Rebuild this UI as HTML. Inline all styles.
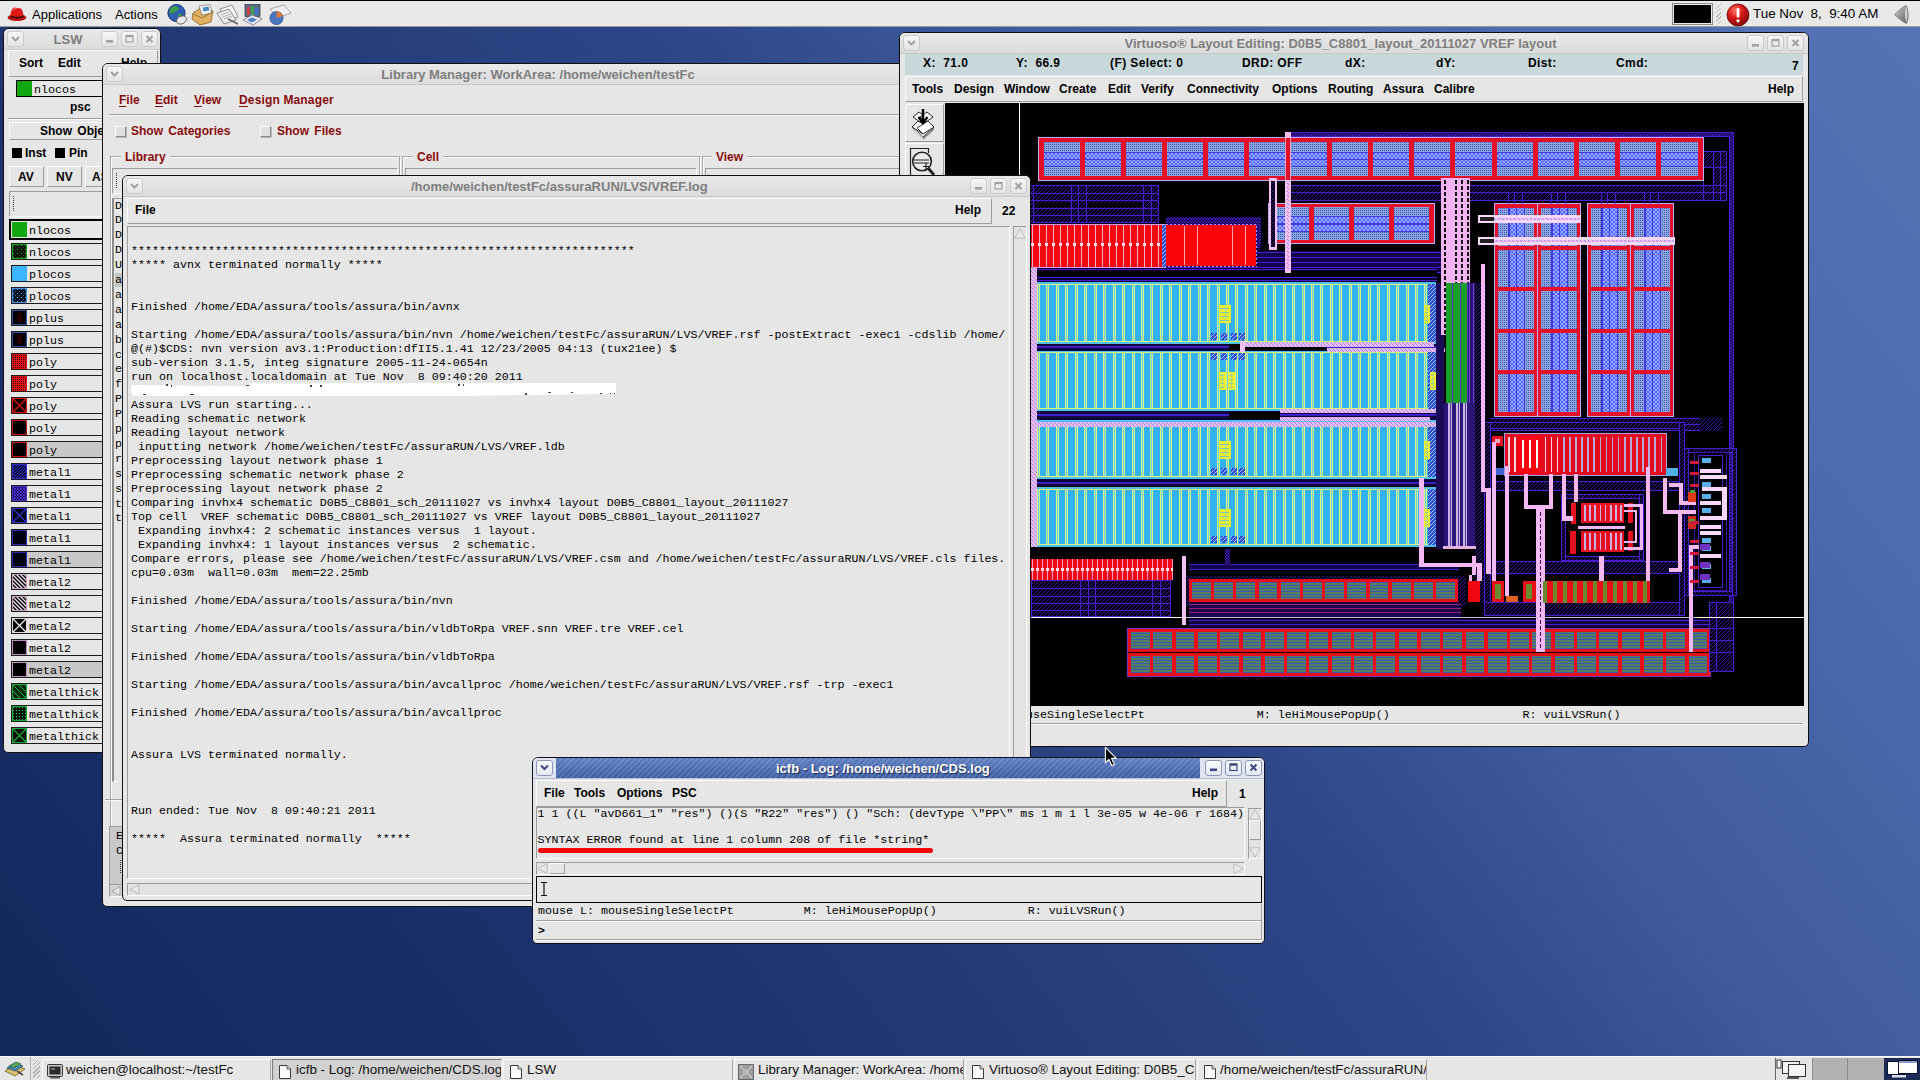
<!DOCTYPE html>
<html><head><meta charset="utf-8"><title>desktop</title>
<style>
*{box-sizing:border-box;margin:0;padding:0}
html,body{width:1920px;height:1080px;overflow:hidden;font-family:"Liberation Sans",sans-serif}
body{position:relative;font-family:"Liberation Sans",sans-serif;font-size:12px;color:#000;
 background:linear-gradient(52deg,#13285c 0%,#182e66 18%,#213875 35%,#2d4786 54%,#3f5b9d 66%,#4c6aae 83%,#5272b4 96%,#5474b6 100%)}
.abs{position:absolute}
.sans{font-family:"Liberation Sans",sans-serif}
.mono{font-family:"Liberation Mono",monospace;font-size:11.67px;white-space:pre;color:#000}
.b{font-weight:bold}
/* panels */
#top{left:0;top:0;width:1920px;height:27px;background:#e9e9e9;border-top:1px solid #000;border-bottom:1px solid #9a9a9a}
#bot{left:0;top:1056px;width:1920px;height:24px;background:#e6e6e6;border-top:1px solid #f8f8f8}
/* windows */
.win{position:absolute;background:#e6e6e6;border:1px solid #101010;border-radius:6px 6px 5px 5px;overflow:hidden}
.tb{position:absolute;left:0;top:0;right:0;height:21px;background:linear-gradient(#e9e9e9,#dcdcdc);border-bottom:1px solid #c8c8c8}
.tb .ttl{position:absolute;left:0;right:0;top:2px;text-align:center;font-weight:bold;font-size:13px;color:#7e7e7e;line-height:17px;white-space:pre}
.wb{position:absolute;top:3px;width:17px;height:15px;border:1px solid #c4c4c4;border-radius:3px;background:linear-gradient(#f4f4f4,#e2e2e2);box-shadow:inset 0 0 0 1px #f8f8f8}
.wb svg{position:absolute;left:0;top:0}
.raised{border:1px solid;border-color:#fbfbfb #9c9c9c #9c9c9c #fbfbfb}
.sunken{border:1px solid;border-color:#9c9c9c #fbfbfb #fbfbfb #9c9c9c}
u{text-underline-offset:2px}
.menu{position:absolute;font-weight:bold;font-size:12px;white-space:pre}

.lrow{position:absolute;left:7px;width:120px;height:17px;border:1px solid #1c1c1c;}
.lrow svg{position:absolute;left:0;top:0}
.lrow span{position:absolute;left:17px;top:1.5px;font-family:"Liberation Mono",monospace;font-size:11.67px;line-height:15px;white-space:pre}
.wbtn{position:absolute;top:2px;width:17px;height:16px;border:1px solid #cacaca;border-radius:3px;background:linear-gradient(#f6f6f6,#e4e4e4)}

.red{color:#8a0c0c}
.chk{position:absolute;width:11px;height:11px;border:1px solid;border-color:#fdfdfd #8c8c8c #8c8c8c #fdfdfd;background:#e0e0e0;box-shadow:1px 1px 0 #b8b8b8}
.etch{position:absolute;border:1px solid #a8a8a8;box-shadow:1px 1px 0 #fbfbfb, inset 1px 1px 0 #fbfbfb}

.awb{position:absolute;top:2px;width:17px;height:16px;border:1px solid #8a96bc;border-radius:3px;background:linear-gradient(#fbfbff,#e4e8f2)}
.atb{position:absolute;left:0;top:0;right:0;height:21px;background:#dfe4ef;border-bottom:1px solid #b8c0d8}
.atb .bar{position:absolute;left:23px;right:64px;top:0;height:20px;background:repeating-linear-gradient(135deg,rgba(255,255,255,.13) 0 1.5px,rgba(255,255,255,0) 1.5px 4px),linear-gradient(#5f80c0,#4a6aae 60%,#4060a4)}
.atb .ttl{position:absolute;top:2px;font-weight:bold;font-size:13px;color:#fff;line-height:17px;white-space:pre;text-shadow:1px 1px 1px #1c2c5c}

.task{position:absolute;top:2px;height:22px;border:1px solid;border-color:#fafafa #a8a8a8 #a8a8a8 #fafafa;overflow:hidden}
.task.act{background:#d2d2d2;border-color:#7c7c7c #f4f4f4 #f4f4f4 #7c7c7c}
.task span{position:absolute;top:2px;font-size:13.4px;line-height:16px;white-space:pre;color:#111}
</style></head>
<body>
<!-- TOP PANEL -->
<div id="top" class="abs">
 <svg class="abs" style="left:6px;top:3px" width="22" height="20" viewBox="0 0 22 20">
  <ellipse cx="11" cy="13.5" rx="9.3" ry="3.6" fill="#b80f0f"/>
  <path d="M4.5 12.5 C4.5 6 7 3.2 9.5 3.6 C11 3.9 12 4.6 13.5 4.2 C16 3.6 17.2 8 17.6 12.5 C14 15 8 15 4.5 12.5Z" fill="#e01818"/>
  <path d="M4.6 11.2 C8 13.4 14 13.4 17.5 11.2 L17.6 12.8 C14 15 8 15 4.5 12.8Z" fill="#2a0a0a"/>
  <path d="M7 6.5 C8 4.5 9.5 4.2 10.5 4.6" stroke="#ff8a8a" stroke-width="1" fill="none"/>
 </svg>
 <div class="abs" style="left:32px;top:6px;font-size:13px;line-height:16px">Applications</div>
 <div class="abs" style="left:115px;top:6px;font-size:13px;line-height:16px">Actions</div>
 <!-- launcher icons -->
 <svg class="abs" style="left:166px;top:2px" width="126" height="23" viewBox="0 0 126 23">
  <!-- globe+mouse -->
  <circle cx="10.5" cy="10" r="8.6" fill="#2f5fae"/><path d="M5 5 C8 2 12 3 13 6 C11 9 7 9 5 12 C3 9 3 7 5 5Z" fill="#3f9a4a"/><path d="M12 11 C15 10 17 12 16 15 C14 17 12 15 12 11Z" fill="#3f9a4a"/>
  <circle cx="10.5" cy="10" r="8.6" fill="none" stroke="#1b3a78" stroke-width="1"/>
  <ellipse cx="15.5" cy="17" rx="5.2" ry="3.8" fill="#e8e8e8" stroke="#555" stroke-width=".8" transform="rotate(-25 15.5 17)"/>
  <!-- mail -->
  <path d="M27 10 L36 4 L47 8 L45 19 L34 22 L26 16Z" fill="#e0b060" stroke="#8a6420" stroke-width=".8"/>
  <path d="M33 3 L44 1.5 L46 10 L36 12Z" fill="#f4f4f4" stroke="#777" stroke-width=".7"/><rect x="37" y="4" width="6" height="4" fill="#4a88c8" transform="rotate(-8 40 6)"/>
  <path d="M27 11 L36 15 L46 9" fill="none" stroke="#8a6420" stroke-width=".8"/>
  <!-- documents -->
  <path d="M54 6 L66 2 L72 14 L60 19Z" fill="#f6f6f6" stroke="#777" stroke-width=".8"/>
  <path d="M51 10 L63 6 L70 17 L58 21Z" fill="#ececec" stroke="#777" stroke-width=".8"/>
  <path d="M55 12 L63 9 M56.5 14 L65 11 M58 16 L66.5 13" stroke="#999" stroke-width=".7"/>
  <path d="M62 16 L72 21" stroke="#666" stroke-width="1.6"/>
  <!-- chart/presentation -->
  <rect x="79" y="1.5" width="15" height="12" fill="#5a6a8a" stroke="#333" stroke-width=".7"/><rect x="81" y="4" width="3" height="8" fill="#d04040"/><rect x="85" y="3" width="3" height="9" fill="#40a050"/><rect x="89" y="5" width="3" height="7" fill="#4070d0"/>
  <path d="M77 17 L86 12 L96 16 L87 22Z" fill="#e8eef8" stroke="#667" stroke-width=".7"/><path d="M81 17 L86 14.5 L91 16.5 L86 19.5Z" fill="#4a7cc8"/>
  <!-- pie -->
  <path d="M104 6 L118 2 L125 10 L112 15Z" fill="#f0f0f0" stroke="#888" stroke-width=".7"/>
  <circle cx="110.5" cy="15" r="6.6" fill="#4a78c0" stroke="#2a4a80" stroke-width=".7"/><path d="M110.5 15 L110.5 8.4 A6.6 6.6 0 0 1 116.8 13Z" fill="#e07838"/>
 </svg>
 <!-- right side -->
 <div class="abs" style="left:1672px;top:2px;width:41px;height:22px;background:#000;border:1px solid #8a8a8a;box-shadow:inset 0 0 0 1px #ececec"></div>
 <div class="abs" style="left:1716px;top:3px;width:5px;height:20px;background:repeating-linear-gradient(135deg,#bdbdbd 0 1px,transparent 1px 3px)"></div>
 <svg class="abs" style="left:1726px;top:2px" width="24" height="24" viewBox="0 0 24 24">
  <defs><radialGradient id="rg" cx=".38" cy=".3" r=".75"><stop offset="0" stop-color="#ff7a6a"/><stop offset=".45" stop-color="#d81818"/><stop offset="1" stop-color="#7a0808"/></radialGradient></defs>
  <circle cx="12" cy="12" r="11" fill="url(#rg)" stroke="#6a0a0a" stroke-width=".8"/>
  <rect x="10.6" y="5" width="2.8" height="9.5" rx="1.2" fill="#fff"/><circle cx="12" cy="17.8" r="1.6" fill="#fff"/>
 </svg>
 <div class="abs" style="left:1753px;top:5px;font-size:13.4px;line-height:16px;white-space:pre">Tue Nov  8,  9:40 AM</div>
 <svg class="abs" style="left:1892px;top:3px" width="20" height="21" viewBox="0 0 20 21">
  <defs><linearGradient id="spk" x1="0" y1="0" x2="1" y2="1"><stop offset="0" stop-color="#dcdcdc"/><stop offset=".5" stop-color="#969696"/><stop offset="1" stop-color="#5a5a5a"/></linearGradient></defs>
  <path d="M2.500 10.500C6 7 10 3.500 14 1.500C16.500 5 17 15 14.500 19.500C10 17.500 6 14 2.500 10.500Z" fill="url(#spk)" stroke="#707070" stroke-width=".7"/>
  <path d="M13.800 2.500C15.600 6 16 14 14.200 18.500C12.800 14 12.800 7 13.800 2.500Z" fill="#d4d4d4"/>
 </svg>
</div>
<!-- WINDOWS placeholder -->
<div class="win" id="lsw" style="left:3px;top:28px;width:158px;height:725px">
 <div class="tb"><div class="wbtn" style="left:3px;width:17px"><svg width="15" height="14" viewBox="0 0 15 14"><path d="M4 5L7.5 8.5L11 5" stroke="#a2a2a2" stroke-width="2" fill="none"/></svg></div><div class="ttl" style="left:34px;right:62px">LSW</div><div class="wbtn" style="left:137px"><svg width="15" height="14" viewBox="0 0 15 14"><path d="M4.5 4L10.5 10M10.5 4L4.5 10" stroke="#a2a2a2" stroke-width="2"/></svg></div><div class="wbtn" style="left:117px"><svg width="15" height="14" viewBox="0 0 15 14"><rect x="4" y="3.5" width="7" height="6.5" fill="none" stroke="#a2a2a2" stroke-width="1.2"/><rect x="4" y="3" width="7" height="2.2" fill="#a2a2a2"/></svg></div><div class="wbtn" style="left:97px"><svg width="15" height="14" viewBox="0 0 15 14"><rect x="4" y="8" width="7" height="2.6" fill="#a2a2a2"/></svg></div></div>
 <div class="abs raised" style="left:4px;top:21px;width:150px;height:27px"></div>
 <div class="menu" style="left:15px;top:27px">Sort</div><div class="menu" style="left:54px;top:27px">Edit</div><div class="menu" style="left:117px;top:27px">Help</div>
 <div class="abs" style="left:12px;top:51px;width:120px;height:17px;border:1px solid #000"><div class="abs" style="left:0;top:0;width:15px;height:15px;background:#10a810"></div><span class="mono abs" style="left:17px;top:1.5px;line-height:15px">nlocos</span></div>
 <div class="menu" style="left:66px;top:71px">psc</div>
 <div class="abs" style="left:4px;top:89px;width:150px;height:2px;border-top:1px solid #9c9c9c;border-bottom:1px solid #fbfbfb"></div>
 <div class="abs raised" style="left:5px;top:93px;width:148px;height:18px"></div>
 <div class="menu" style="left:36px;top:95px;word-spacing:2px">Show Objects</div>
 <div class="abs" style="left:8px;top:119px;width:10px;height:10px;background:#000"></div><div class="menu" style="left:21px;top:117px">Inst</div>
 <div class="abs" style="left:51px;top:119px;width:10px;height:10px;background:#000"></div><div class="menu" style="left:65px;top:117px">Pin</div>
 <div class="abs raised" style="left:5px;top:137px;width:35px;height:21px"></div><div class="menu" style="left:14px;top:141px">AV</div>
 <div class="abs raised" style="left:43px;top:137px;width:35px;height:21px"></div><div class="menu" style="left:52px;top:141px">NV</div>
 <div class="abs raised" style="left:81px;top:137px;width:35px;height:21px"></div><div class="menu" style="left:88px;top:141px">AS</div>
 <div class="abs sunken" style="left:5px;top:162px;width:148px;height:26px"></div>
 <div class="abs" style="left:9px;top:167px;width:1px;height:16px;background:repeating-linear-gradient(#333 0 1px,transparent 1px 2px)"></div>
 <div class="abs" style="left:5px;top:190px;width:124px;height:21px;border:2px solid #000"><div class="abs" style="left:1px;top:1px;width:15px;height:15px;background:#10a810"></div><span class="mono abs" style="left:18px;top:2.5px;line-height:15px">nlocos</span></div>
 <svg width="0" height="0" style="position:absolute"><defs>
<pattern id="dotg" width="4" height="4" patternUnits="userSpaceOnUse"><rect width="4" height="4" fill="#041804"/><rect x="1" y="1" width="1" height="1" fill="#20a820"/><rect x="3" y="3" width="1" height="1" fill="#702020"/></pattern>
<pattern id="dotb" width="4" height="4" patternUnits="userSpaceOnUse"><rect width="4" height="4" fill="#04101c"/><rect x="1" y="1" width="1" height="1" fill="#48a8ff"/><rect x="3" y="3" width="1" height="1" fill="#2868b0"/></pattern>
<pattern id="dott" width="3" height="3" patternUnits="userSpaceOnUse"><rect width="3" height="3" fill="#021402"/><rect x="1" y="1" width="1" height="1" fill="#30c050"/></pattern>
<pattern id="gridr" width="2" height="2" patternUnits="userSpaceOnUse"><rect width="2" height="2" fill="#e01818"/><rect x="1" y="1" width="1" height="1" fill="#400"/></pattern>
<pattern id="hatm" width="3" height="3" patternUnits="userSpaceOnUse"><rect width="3" height="3" fill="#06062a"/><path d="M-1 1L1 -1M0 3L3 0M2 4L4 2" stroke="#3838e0" stroke-width="1"/></pattern>
<pattern id="xhm" width="3" height="3" patternUnits="userSpaceOnUse"><rect width="3" height="3" fill="#1a0a50"/><path d="M0 3L3 0M0 0L3 3" stroke="#5038e0" stroke-width=".9"/></pattern>
<pattern id="hatw" width="4" height="4" patternUnits="userSpaceOnUse"><rect width="4" height="4" fill="#000"/><path d="M-1 -1L5 5M-1 3L1 5M3 -1L5 1" stroke="#f0e0f0" stroke-width="1.3"/></pattern>
<pattern id="hatt" width="6" height="6" patternUnits="userSpaceOnUse"><rect width="6" height="6" fill="#032803"/><path d="M-1 -1L7 7M-1 5L1 7M5 -1L7 1" stroke="#28b848" stroke-width="1"/></pattern>
</defs></svg>
<div class="lrow" style="top:214px;background:#e6e6e6"><svg width="15" height="15" viewBox="0 0 15 15"><rect width="15" height="15" fill="#041804"/><rect x=".5" y=".5" width="14" height="14" fill="url(#dotg)" stroke="#18a018"/></svg><span>nlocos</span></div>
<div class="lrow" style="top:236px;background:#e6e6e6"><svg width="15" height="15" viewBox="0 0 15 15"><rect width="15" height="15" fill="#3cb4ff"/></svg><span>plocos</span></div>
<div class="lrow" style="top:258px;background:#e6e6e6"><svg width="15" height="15" viewBox="0 0 15 15"><rect width="15" height="15" fill="#04101c"/><rect x=".5" y=".5" width="14" height="14" fill="url(#dotb)" stroke="#3c8ce0"/></svg><span>plocos</span></div>
<div class="lrow" style="top:280px;background:#e6e6e6"><svg width="15" height="15" viewBox="0 0 15 15"><rect width="15" height="15" fill="#000"/><rect x=".5" y=".5" width="14" height="14" fill="none" stroke="#3050a0"/><rect x="5" y="3" width="5" height="9" fill="#280000"/></svg><span>pplus</span></div>
<div class="lrow" style="top:302px;background:#e6e6e6"><svg width="15" height="15" viewBox="0 0 15 15"><rect width="15" height="15" fill="#000"/><rect x=".5" y=".5" width="14" height="14" fill="none" stroke="#3050a0"/><rect x="5" y="3" width="5" height="9" fill="#280000"/></svg><span>pplus</span></div>
<div class="lrow" style="top:324px;background:#e6e6e6"><svg width="15" height="15" viewBox="0 0 15 15"><rect width="15" height="15" fill="#300"/><rect x=".5" y=".5" width="14" height="14" fill="url(#gridr)" stroke="#e01010"/></svg><span>poly</span></div>
<div class="lrow" style="top:346px;background:#e6e6e6"><svg width="15" height="15" viewBox="0 0 15 15"><rect width="15" height="15" fill="#300"/><rect x=".5" y=".5" width="14" height="14" fill="url(#gridr)" stroke="#e01010"/></svg><span>poly</span></div>
<div class="lrow" style="top:368px;background:#e6e6e6"><svg width="15" height="15" viewBox="0 0 15 15"><rect width="15" height="15" fill="#100"/><rect x=".5" y=".5" width="14" height="14" fill="none" stroke="#e01010"/><path d="M1 1L14 14M14 1L1 14" stroke="#e01010" stroke-width="1.2"/></svg><span>poly</span></div>
<div class="lrow" style="top:390px;background:#e6e6e6"><svg width="15" height="15" viewBox="0 0 15 15"><rect width="15" height="15" fill="#050000"/><rect x=".5" y=".5" width="14" height="14" fill="none" stroke="#d01010"/></svg><span>poly</span></div>
<div class="lrow" style="top:412px;background:#c8c8c8"><svg width="15" height="15" viewBox="0 0 15 15"><rect width="15" height="15" fill="#050000"/><rect x=".5" y=".5" width="14" height="14" fill="none" stroke="#d01010"/></svg><span>poly</span></div>
<div class="lrow" style="top:434px;background:#e6e6e6"><svg width="15" height="15" viewBox="0 0 15 15"><rect width="15" height="15" fill="#06062a"/><rect x=".5" y=".5" width="14" height="14" fill="url(#hatm)" stroke="#3030d0"/></svg><span>metal1</span></div>
<div class="lrow" style="top:456px;background:#e6e6e6"><svg width="15" height="15" viewBox="0 0 15 15"><rect width="15" height="15" fill="#1a0a50"/><rect x=".5" y=".5" width="14" height="14" fill="url(#xhm)" stroke="#4030d0"/></svg><span>metal1</span></div>
<div class="lrow" style="top:478px;background:#e6e6e6"><svg width="15" height="15" viewBox="0 0 15 15"><rect width="15" height="15" fill="#02021a"/><rect x=".5" y=".5" width="14" height="14" fill="none" stroke="#3030c8"/><path d="M1 1L14 14M14 1L1 14" stroke="#3838d0" stroke-width="1.1"/></svg><span>metal1</span></div>
<div class="lrow" style="top:500px;background:#e6e6e6"><svg width="15" height="15" viewBox="0 0 15 15"><rect width="15" height="15" fill="#010110"/><rect x=".5" y=".5" width="14" height="14" fill="none" stroke="#2828b0"/></svg><span>metal1</span></div>
<div class="lrow" style="top:522px;background:#c8c8c8"><svg width="15" height="15" viewBox="0 0 15 15"><rect width="15" height="15" fill="#010110"/><rect x=".5" y=".5" width="14" height="14" fill="none" stroke="#2828b0"/></svg><span>metal1</span></div>
<div class="lrow" style="top:544px;background:#e6e6e6"><svg width="15" height="15" viewBox="0 0 15 15"><rect width="15" height="15" fill="#000"/><rect x=".5" y=".5" width="14" height="14" fill="url(#hatw)" stroke="#c8a0c8"/></svg><span>metal2</span></div>
<div class="lrow" style="top:566px;background:#e6e6e6"><svg width="15" height="15" viewBox="0 0 15 15"><rect width="15" height="15" fill="#000"/><rect x=".5" y=".5" width="14" height="14" fill="url(#hatw)" stroke="#c8a0c8"/></svg><span>metal2</span></div>
<div class="lrow" style="top:588px;background:#e6e6e6"><svg width="15" height="15" viewBox="0 0 15 15"><rect width="15" height="15" fill="#000"/><rect x=".5" y=".5" width="14" height="14" fill="none" stroke="#e8d0e8"/><path d="M1 1L14 14M14 1L1 14" stroke="#f4f4f4" stroke-width="1.2"/></svg><span>metal2</span></div>
<div class="lrow" style="top:610px;background:#e6e6e6"><svg width="15" height="15" viewBox="0 0 15 15"><rect width="15" height="15" fill="#000"/><rect x=".5" y=".5" width="14" height="14" fill="none" stroke="#c090c0"/></svg><span>metal2</span></div>
<div class="lrow" style="top:632px;background:#c8c8c8"><svg width="15" height="15" viewBox="0 0 15 15"><rect width="15" height="15" fill="#000"/><rect x=".5" y=".5" width="14" height="14" fill="none" stroke="#c090c0"/></svg><span>metal2</span></div>
<div class="lrow" style="top:654px;background:#e6e6e6"><svg width="15" height="15" viewBox="0 0 15 15"><rect width="15" height="15" fill="#032803"/><rect x=".5" y=".5" width="14" height="14" fill="url(#hatt)" stroke="#18a838"/></svg><span>metalthick</span></div>
<div class="lrow" style="top:676px;background:#e6e6e6"><svg width="15" height="15" viewBox="0 0 15 15"><rect width="15" height="15" fill="#021402"/><rect x=".5" y=".5" width="14" height="14" fill="url(#dott)" stroke="#18a838"/></svg><span>metalthick</span></div>
<div class="lrow" style="top:698px;background:#e6e6e6"><svg width="15" height="15" viewBox="0 0 15 15"><rect width="15" height="15" fill="#021002"/><rect x=".5" y=".5" width="14" height="14" fill="none" stroke="#18a838"/><path d="M1 1L14 14M14 1L1 14" stroke="#20b040" stroke-width="1.1"/></svg><span>metalthick</span></div>
</div>
<div class="win" id="lib" style="left:102px;top:63px;width:872px;height:844px">
 <div class="tb"><div class="wbtn" style="left:3px;width:17px"><svg width="15" height="14" viewBox="0 0 15 14"><path d="M4 5L7.5 8.5L11 5" stroke="#a2a2a2" stroke-width="2" fill="none"/></svg></div><div class="ttl" style="left:0;right:0">Library Manager: WorkArea: /home/weichen/testFc</div></div>
 <div class="menu red" style="left:16px;top:29px"><u>F</u>ile</div>
 <div class="menu red" style="left:52px;top:29px"><u>E</u>dit</div>
 <div class="menu red" style="left:91px;top:29px"><u>V</u>iew</div>
 <div class="menu red" style="left:136px;top:29px;letter-spacing:.15px"><u>D</u>esign Manager</div>
 <div class="abs" style="left:6px;top:50px;width:860px;height:2px;border-top:1px solid #a0a0a0;border-bottom:1px solid #fbfbfb"></div>
 <div class="chk" style="left:12px;top:62px"></div><div class="menu red" style="left:28px;top:60px;word-spacing:2px">Show Categories</div>
 <div class="chk" style="left:157px;top:62px"></div><div class="menu red" style="left:174px;top:60px;word-spacing:2px">Show Files</div>
 <div class="etch" style="left:7px;top:92px;width:290px;height:740px"></div>
 <div class="etch" style="left:299px;top:92px;width:298px;height:740px"></div>
 <div class="etch" style="left:599px;top:92px;width:268px;height:740px"></div>
 <div class="menu red" style="left:18px;top:86px;background:#e6e6e6;padding:0 4px">Library</div>
 <div class="menu red" style="left:310px;top:86px;background:#e6e6e6;padding:0 4px">Cell</div>
 <div class="menu red" style="left:609px;top:86px;background:#e6e6e6;padding:0 4px">View</div>
 <div class="abs sunken" style="left:9px;top:104px;width:286px;height:26px"></div>
 <div class="abs sunken" style="left:302px;top:104px;width:292px;height:26px"></div>
 <div class="abs sunken" style="left:602px;top:104px;width:262px;height:26px"></div>
 <div class="abs" style="left:13px;top:109px;width:1px;height:16px;background:repeating-linear-gradient(#333 0 1px,transparent 1px 2px)"></div>
 <div class="abs sunken" style="left:9px;top:134px;width:286px;height:584px;border-left:2px solid #8c8c8c"></div>
 <span class="mono abs" style="left:12px;top:134.5px;line-height:14px;">D</span><span class="mono abs" style="left:12px;top:149.4px;line-height:14px;">D</span><span class="mono abs" style="left:12px;top:164.3px;line-height:14px;">D</span><span class="mono abs" style="left:12px;top:179.2px;line-height:14px;">D</span><span class="mono abs" style="left:12px;top:194.1px;line-height:14px;">U</span><span class="mono abs" style="left:12px;top:209.0px;line-height:14px;background:#c4c4c4;">a</span><span class="mono abs" style="left:12px;top:223.9px;line-height:14px;">a</span><span class="mono abs" style="left:12px;top:238.8px;line-height:14px;">a</span><span class="mono abs" style="left:12px;top:253.7px;line-height:14px;">a</span><span class="mono abs" style="left:12px;top:268.6px;line-height:14px;">b</span><span class="mono abs" style="left:12px;top:283.5px;line-height:14px;">c</span><span class="mono abs" style="left:12px;top:298.4px;line-height:14px;">e</span><span class="mono abs" style="left:12px;top:313.3px;line-height:14px;">f</span><span class="mono abs" style="left:12px;top:328.2px;line-height:14px;">P</span><span class="mono abs" style="left:12px;top:343.1px;line-height:14px;">P</span><span class="mono abs" style="left:12px;top:358.0px;line-height:14px;">p</span><span class="mono abs" style="left:12px;top:372.9px;line-height:14px;">p</span><span class="mono abs" style="left:12px;top:387.8px;line-height:14px;">r</span><span class="mono abs" style="left:12px;top:402.7px;line-height:14px;">s</span><span class="mono abs" style="left:12px;top:417.6px;line-height:14px;">s</span><span class="mono abs" style="left:12px;top:432.5px;line-height:14px;">t</span><span class="mono abs" style="left:12px;top:447.4px;line-height:14px;">t</span>
 <div class="abs" style="left:2px;top:735px;width:860px;height:2px;border-top:1px solid #a0a0a0;border-bottom:1px solid #fbfbfb"></div>
 <div class="abs sunken" style="left:6px;top:762px;width:860px;height:60px;background:#c9c9c9"></div>
 <span class="mono abs" style="left:13px;top:765px;line-height:14px">E</span><span class="mono abs" style="left:13px;top:780px;line-height:14px">C</span>
 <div class="abs" style="left:17px;top:796px;width:1px;height:14px;background:repeating-linear-gradient(#333 0 1px,transparent 1px 2px)"></div>
 <div class="abs sunken" style="left:6px;top:820px;width:860px;height:13px;background:#d2d2d2"></div>
 <svg class="abs" style="left:8px;top:822px" width="10" height="10"><path d="M9 .5L1 5L9 9.5Z" fill="#e4e4e4" stroke="#9a9a9a" stroke-width=".8"/></svg>
</div>
<div class="win" id="vir" style="left:899px;top:32px;width:910px;height:715px">
 <div class="tb"><div class="wbtn" style="left:3px;width:17px"><svg width="15" height="14" viewBox="0 0 15 14"><path d="M4 5L7.5 8.5L11 5" stroke="#a2a2a2" stroke-width="2" fill="none"/></svg></div><div class="ttl" style="left:0;right:27px">Virtuoso® Layout Editing: D0B5_C8801_layout_20111027 VREF layout</div><div class="wbtn" style="left:887px"><svg width="15" height="14" viewBox="0 0 15 14"><path d="M4.5 4L10.5 10M10.5 4L4.5 10" stroke="#a2a2a2" stroke-width="2"/></svg></div><div class="wbtn" style="left:867px"><svg width="15" height="14" viewBox="0 0 15 14"><rect x="4" y="3.5" width="7" height="6.5" fill="none" stroke="#a2a2a2" stroke-width="1.2"/><rect x="4" y="3" width="7" height="2.2" fill="#a2a2a2"/></svg></div><div class="wbtn" style="left:847px"><svg width="15" height="14" viewBox="0 0 15 14"><rect x="4" y="8" width="7" height="2.6" fill="#a2a2a2"/></svg></div></div>
 <div class="abs" style="left:5px;top:21px;width:898px;height:21px;background:#c9d8db"></div>
 <div class="menu" style="left:23px;top:23px;letter-spacing:.4px">X:  71.0</div><div class="menu" style="left:116px;top:23px;letter-spacing:.4px">Y:  66.9</div><div class="menu" style="left:210px;top:23px;letter-spacing:.4px">(F) Select: 0</div><div class="menu" style="left:342px;top:23px;letter-spacing:.4px">DRD: OFF</div><div class="menu" style="left:445px;top:23px;letter-spacing:.4px">dX:</div><div class="menu" style="left:536px;top:23px;letter-spacing:.4px">dY:</div><div class="menu" style="left:628px;top:23px;letter-spacing:.4px">Dist:</div><div class="menu" style="left:716px;top:23px;letter-spacing:.4px">Cmd:</div><div class="menu" style="left:892px;top:26px">7</div>
 <div class="abs raised" style="left:5px;top:43px;width:898px;height:26px"></div>
 <div class="menu" style="left:12px;top:49px">Tools</div><div class="menu" style="left:54px;top:49px">Design</div><div class="menu" style="left:104px;top:49px">Window</div><div class="menu" style="left:159px;top:49px">Create</div><div class="menu" style="left:208px;top:49px">Edit</div><div class="menu" style="left:241px;top:49px">Verify</div><div class="menu" style="left:287px;top:49px">Connectivity</div><div class="menu" style="left:372px;top:49px">Options</div><div class="menu" style="left:428px;top:49px">Routing</div><div class="menu" style="left:483px;top:49px">Assura</div><div class="menu" style="left:534px;top:49px">Calibre</div><div class="menu" style="left:868px;top:49px">Help</div>
 <div class="abs raised" style="left:5px;top:71px;width:39px;height:38px"></div>
 <div class="abs raised" style="left:5px;top:110px;width:39px;height:38px"></div>
 <svg class="abs" style="left:9px;top:72px" width="32" height="36" viewBox="909 105 32 36">
  <path d="M923 120L934 127L923 137L912 127Z" fill="#fafafa" stroke="#111" stroke-width="1"/>
  <path d="M923 137L934 127L934 130L923 140Z" fill="#8a8a8a"/><path d="M923 137L912 127L912 130L923 140Z" fill="#d0d0d0"/>
  <path d="M912 127L918 121L929 128L923 134Z" fill="#fff" stroke="#111" stroke-width=".9"/>
  <path d="M934 127L928 121L917 128L923 134Z" fill="#fff" stroke="#111" stroke-width=".9"/>
  <path d="M913 117L919 112L926 117L920 122Z" fill="#fff" stroke="#111" stroke-width=".9"/>
  <path d="M933 117L927 112L920 117L926 122Z" fill="#fff" stroke="#111" stroke-width=".9"/>
  <path d="M923 109V122M918.500 117L923 123L927.500 117" stroke="#000" stroke-width="2.400" fill="none"/>
 </svg>
 <svg class="abs" style="left:9px;top:112px" width="32" height="36" viewBox="909 145 32 36">
  <path d="M910.500 181V148.500H928.500V153" fill="none" stroke="#222" stroke-width="1.200"/>
  <circle cx="922" cy="161.500" r="9.300" fill="#ececec" stroke="#222" stroke-width="1.600"/>
  <path d="M914 160H929M914 163H929" stroke="#222" stroke-width="1"/><path d="M926 163V170M923 166.500H929" stroke="#222" stroke-width="1.200"/>
  <path d="M928.500 168.500L934 175" stroke="#222" stroke-width="3"/>
 </svg>
 <div class="abs" id="canvas" style="left:45px;top:70px;width:859px;height:603px;background:#000;overflow:hidden"><!--LAYOUT_S--><svg class="abs" style="left:0;top:0" width="859" height="603" viewBox="945 103 859 603" shape-rendering="crispEdges">
<defs>
<pattern id="pcell" width="2" height="2" patternUnits="userSpaceOnUse"><rect width="2" height="2" fill="#8aa6e0"/><rect width="1" height="1" fill="#4058b0"/></pattern>
<pattern id="pxh" width="4" height="4" patternUnits="userSpaceOnUse"><rect width="4" height="4" fill="#8eaeff"/><path d="M0 0L4 4M4 0L0 4" stroke="#4a4af4" stroke-width=".75" shape-rendering="auto"/></pattern>
<pattern id="phat" width="4" height="4" patternUnits="userSpaceOnUse"><rect width="4" height="4" fill="#040010"/><path d="M-1 1L1 -1M0 4L4 0M3 5L5 3" stroke="#4420c0" stroke-width=".75" shape-rendering="auto"/></pattern>
<pattern id="pring" width="3" height="3" patternUnits="userSpaceOnUse"><rect width="3" height="3" fill="#100440"/><path d="M0 0L3 3M3 0L0 3" stroke="#4420c0" stroke-width=".8" shape-rendering="auto"/></pattern>
<pattern id="pcyan" width="9.5" height="8" patternUnits="userSpaceOnUse"><rect width="9.5" height="8" fill="#34b4f2"/><rect x="0" width="1.1" height="8" fill="#d6f878"/><rect x="2.6" width="1.1" height="8" fill="#d6f878"/><rect x="1.1" width="1.5" height="8" fill="#58c4f0"/></pattern>
<pattern id="prg" width="2" height="3" patternUnits="userSpaceOnUse"><rect width="2" height="3" fill="#4c8060"/><rect width="2" height="1" fill="#3858c0"/><rect y="1" width="1" height="1" fill="#6a7a48"/></pattern>
<pattern id="ppink" width="4" height="4" patternUnits="userSpaceOnUse"><rect width="4" height="4" fill="#f0b8f4"/><path d="M0 0L4 4" stroke="#8890e0" stroke-width=".9" shape-rendering="auto"/></pattern>
<pattern id="pbh" width="4" height="4" patternUnits="userSpaceOnUse"><rect width="4" height="4" fill="#2c50d8"/><path d="M0 4L4 0" stroke="#a8c8ff" stroke-width="1" shape-rendering="auto"/></pattern>
<pattern id="pfing" width="7" height="8" patternUnits="userSpaceOnUse"><rect width="7" height="8" fill="#f40810"/><rect x="2.5" width="1" height="8" fill="#f4b0c8"/><rect x="5.500" width=".8" height="8" fill="#a01060"/></pattern>
<pattern id="pfing2" width="5" height="8" patternUnits="userSpaceOnUse"><rect width="5" height="8" fill="#f00814"/><rect x="2" width="1.2" height="8" fill="#f0a0c0"/></pattern>
<pattern id="prgc" width="10" height="8" patternUnits="userSpaceOnUse"><rect width="10" height="8" fill="#e81018"/><rect x="3" width="4" height="8" fill="#6a8a30"/></pattern>
<pattern id="ppdash" width="29" height="6" patternUnits="userSpaceOnUse"><rect width="29" height="6" fill="#f4b4f4"/><rect x="5" width="1.5" height="4" fill="#111"/><rect x="11" width="1.5" height="4" fill="#111"/><rect x="17" width="1.5" height="4" fill="#111"/><rect x="23" width="1.5" height="4" fill="#111"/></pattern>
</defs>
<path d="M1019.5 103L1019.5 706" stroke="#fff" stroke-width="1"/>
<rect x="1290" y="132" width="444" height="5" fill="url(#pring)" />
<rect x="1729" y="132" width="5" height="470" fill="url(#pring)" />
<path d="M1290 132.5L1734 132.5" stroke="#4a1ed0" stroke-width="1"/>
<path d="M1290 136.5L1730 136.5" stroke="#4a1ed0" stroke-width="1"/>
<path d="M1733.5 132L1733.5 602" stroke="#4a1ed0" stroke-width="1"/>
<path d="M1729.5 136L1729.5 602" stroke="#4a1ed0" stroke-width="1"/>
<rect x="1291" y="185" width="436" height="16" fill="url(#phat)" />
<rect x="1703" y="151" width="24" height="50" fill="url(#phat)" />
<rect x="1703" y="168" width="10" height="17" fill="#000" />
<path d="M1291 185.5L1727 185.5" stroke="#4a1ed0" stroke-width="1"/>
<path d="M1291 192.5L1727 192.5" stroke="#4a1ed0" stroke-width="1"/>
<path d="M1291 200.5L1727 200.5" stroke="#4a1ed0" stroke-width="1"/>
<path d="M1703.5 151L1703.5 201" stroke="#4a1ed0" stroke-width="1"/>
<path d="M1713.5 151L1713.5 201" stroke="#4a1ed0" stroke-width="1"/>
<path d="M1720.5 151L1720.5 201" stroke="#4a1ed0" stroke-width="1"/>
<path d="M1726.5 151L1726.5 201" stroke="#4a1ed0" stroke-width="1"/>
<path d="M1703 151.5L1727 151.5" stroke="#4a1ed0" stroke-width="1"/>
<path d="M1703 167.5L1727 167.5" stroke="#4a1ed0" stroke-width="1"/>
<rect x="1030" y="185" width="129" height="38" fill="url(#phat)" />
<rect x="1036" y="203" width="34" height="4" fill="#000" />
<rect x="1088" y="203" width="54" height="4" fill="#000" />
<path d="M1030 185.5L1159 185.5" stroke="#4a1ed0" stroke-width="1"/>
<path d="M1030 193.5L1159 193.5" stroke="#4a1ed0" stroke-width="1"/>
<path d="M1030 200.5L1159 200.5" stroke="#4a1ed0" stroke-width="1"/>
<path d="M1030 208.5L1159 208.5" stroke="#4a1ed0" stroke-width="1"/>
<path d="M1030 215.5L1159 215.5" stroke="#4a1ed0" stroke-width="1"/>
<path d="M1030 222.5L1159 222.5" stroke="#4a1ed0" stroke-width="1"/>
<path d="M1033.5 185L1033.5 223" stroke="#4a1ed0" stroke-width="1"/>
<path d="M1071.5 185L1071.5 223" stroke="#4a1ed0" stroke-width="1"/>
<path d="M1078.5 185L1078.5 223" stroke="#4a1ed0" stroke-width="1"/>
<path d="M1086.5 185L1086.5 223" stroke="#4a1ed0" stroke-width="1"/>
<path d="M1143.5 185L1143.5 223" stroke="#4a1ed0" stroke-width="1"/>
<path d="M1151.5 185L1151.5 223" stroke="#4a1ed0" stroke-width="1"/>
<path d="M1158.5 185L1158.5 223" stroke="#4a1ed0" stroke-width="1"/>
<rect x="1166" y="217" width="94" height="8" fill="url(#pring)" />
<rect x="1255" y="217" width="6" height="56" fill="url(#pring)" />
<rect x="1160" y="246" width="282" height="28" fill="#12044a" />
<path d="M1160 247.5L1442 247.5" stroke="#4a1ed0" stroke-width="1"/>
<path d="M1160 252.5L1442 252.5" stroke="#4a1ed0" stroke-width="1"/>
<path d="M1160 257.5L1442 257.5" stroke="#4a1ed0" stroke-width="1"/>
<path d="M1160 262.5L1442 262.5" stroke="#4a1ed0" stroke-width="1"/>
<path d="M1160 267.5L1442 267.5" stroke="#4a1ed0" stroke-width="1"/>
<path d="M1160 272.5L1442 272.5" stroke="#4a1ed0" stroke-width="1"/>
<rect x="1260" y="246" width="182" height="5" fill="#000" />
<rect x="1033" y="268" width="404" height="14" fill="#0c0230" />
<path d="M1033 269.5L1437 269.5" stroke="#4a1ed0" stroke-width="1"/>
<path d="M1033 277.5L1437 277.5" stroke="#4a1ed0" stroke-width="1"/>
<path d="M1033 280.5L1437 280.5" stroke="#4a1ed0" stroke-width="1"/>
<rect x="1037" y="271" width="400" height="5" fill="#000" />
<rect x="1038.5" y="138" width="664.04" height="42" fill="#e41028" />
<rect x="1038" y="137.5" width="665.04" height="43" fill="none" stroke="#b8b0ff" stroke-width="1"/>
<rect x="1043.5" y="142" width="36.19" height="33.5" fill="url(#pcell)" />
<rect x="1043.5" y="152.05" width="36.19" height="14.74" fill="url(#pxh)" />
<rect x="1043.5" y="151.55" width="36.19" height="1.2" fill="#4038e4" />
<rect x="1043.5" y="158.92" width="36.19" height="1.2" fill="#4038e4" />
<rect x="1043.5" y="166.29" width="36.19" height="1.2" fill="#4038e4" />
<rect x="1084.69" y="142" width="36.19" height="33.5" fill="url(#pcell)" />
<rect x="1084.69" y="152.05" width="36.19" height="14.74" fill="url(#pxh)" />
<rect x="1084.69" y="151.55" width="36.19" height="1.2" fill="#4038e4" />
<rect x="1084.69" y="158.92" width="36.19" height="1.2" fill="#4038e4" />
<rect x="1084.69" y="166.29" width="36.19" height="1.2" fill="#4038e4" />
<rect x="1125.88" y="142" width="36.19" height="33.5" fill="url(#pcell)" />
<rect x="1125.88" y="152.05" width="36.19" height="14.74" fill="url(#pxh)" />
<rect x="1125.88" y="151.55" width="36.19" height="1.2" fill="#4038e4" />
<rect x="1125.88" y="158.92" width="36.19" height="1.2" fill="#4038e4" />
<rect x="1125.88" y="166.29" width="36.19" height="1.2" fill="#4038e4" />
<rect x="1167.07" y="142" width="36.19" height="33.5" fill="url(#pcell)" />
<rect x="1167.07" y="152.05" width="36.19" height="14.74" fill="url(#pxh)" />
<rect x="1167.07" y="151.55" width="36.19" height="1.2" fill="#4038e4" />
<rect x="1167.07" y="158.92" width="36.19" height="1.2" fill="#4038e4" />
<rect x="1167.07" y="166.29" width="36.19" height="1.2" fill="#4038e4" />
<rect x="1208.26" y="142" width="36.19" height="33.5" fill="url(#pcell)" />
<rect x="1208.26" y="152.05" width="36.19" height="14.74" fill="url(#pxh)" />
<rect x="1208.26" y="151.55" width="36.19" height="1.2" fill="#4038e4" />
<rect x="1208.26" y="158.92" width="36.19" height="1.2" fill="#4038e4" />
<rect x="1208.26" y="166.29" width="36.19" height="1.2" fill="#4038e4" />
<rect x="1249.45" y="142" width="36.19" height="33.5" fill="url(#pcell)" />
<rect x="1249.45" y="152.05" width="36.19" height="14.74" fill="url(#pxh)" />
<rect x="1249.45" y="151.55" width="36.19" height="1.2" fill="#4038e4" />
<rect x="1249.45" y="158.92" width="36.19" height="1.2" fill="#4038e4" />
<rect x="1249.45" y="166.29" width="36.19" height="1.2" fill="#4038e4" />
<rect x="1290.64" y="142" width="36.19" height="33.5" fill="url(#pcell)" />
<rect x="1290.64" y="152.05" width="36.19" height="14.74" fill="url(#pxh)" />
<rect x="1290.64" y="151.55" width="36.19" height="1.2" fill="#4038e4" />
<rect x="1290.64" y="158.92" width="36.19" height="1.2" fill="#4038e4" />
<rect x="1290.64" y="166.29" width="36.19" height="1.2" fill="#4038e4" />
<rect x="1331.83" y="142" width="36.19" height="33.5" fill="url(#pcell)" />
<rect x="1331.83" y="152.05" width="36.19" height="14.74" fill="url(#pxh)" />
<rect x="1331.83" y="151.55" width="36.19" height="1.2" fill="#4038e4" />
<rect x="1331.83" y="158.92" width="36.19" height="1.2" fill="#4038e4" />
<rect x="1331.83" y="166.29" width="36.19" height="1.2" fill="#4038e4" />
<rect x="1373.02" y="142" width="36.19" height="33.5" fill="url(#pcell)" />
<rect x="1373.02" y="152.05" width="36.19" height="14.74" fill="url(#pxh)" />
<rect x="1373.02" y="151.55" width="36.19" height="1.2" fill="#4038e4" />
<rect x="1373.02" y="158.92" width="36.19" height="1.2" fill="#4038e4" />
<rect x="1373.02" y="166.29" width="36.19" height="1.2" fill="#4038e4" />
<rect x="1414.21" y="142" width="36.19" height="33.5" fill="url(#pcell)" />
<rect x="1414.21" y="152.05" width="36.19" height="14.74" fill="url(#pxh)" />
<rect x="1414.21" y="151.55" width="36.19" height="1.2" fill="#4038e4" />
<rect x="1414.21" y="158.92" width="36.19" height="1.2" fill="#4038e4" />
<rect x="1414.21" y="166.29" width="36.19" height="1.2" fill="#4038e4" />
<rect x="1455.4" y="142" width="36.19" height="33.5" fill="url(#pcell)" />
<rect x="1455.4" y="152.05" width="36.19" height="14.74" fill="url(#pxh)" />
<rect x="1455.4" y="151.55" width="36.19" height="1.2" fill="#4038e4" />
<rect x="1455.4" y="158.92" width="36.19" height="1.2" fill="#4038e4" />
<rect x="1455.4" y="166.29" width="36.19" height="1.2" fill="#4038e4" />
<rect x="1496.59" y="142" width="36.19" height="33.5" fill="url(#pcell)" />
<rect x="1496.59" y="152.05" width="36.19" height="14.74" fill="url(#pxh)" />
<rect x="1496.59" y="151.55" width="36.19" height="1.2" fill="#4038e4" />
<rect x="1496.59" y="158.92" width="36.19" height="1.2" fill="#4038e4" />
<rect x="1496.59" y="166.29" width="36.19" height="1.2" fill="#4038e4" />
<rect x="1537.78" y="142" width="36.19" height="33.5" fill="url(#pcell)" />
<rect x="1537.78" y="152.05" width="36.19" height="14.74" fill="url(#pxh)" />
<rect x="1537.78" y="151.55" width="36.19" height="1.2" fill="#4038e4" />
<rect x="1537.78" y="158.92" width="36.19" height="1.2" fill="#4038e4" />
<rect x="1537.78" y="166.29" width="36.19" height="1.2" fill="#4038e4" />
<rect x="1578.97" y="142" width="36.19" height="33.5" fill="url(#pcell)" />
<rect x="1578.97" y="152.05" width="36.19" height="14.74" fill="url(#pxh)" />
<rect x="1578.97" y="151.55" width="36.19" height="1.2" fill="#4038e4" />
<rect x="1578.97" y="158.92" width="36.19" height="1.2" fill="#4038e4" />
<rect x="1578.97" y="166.29" width="36.19" height="1.2" fill="#4038e4" />
<rect x="1620.16" y="142" width="36.19" height="33.5" fill="url(#pcell)" />
<rect x="1620.16" y="152.05" width="36.19" height="14.74" fill="url(#pxh)" />
<rect x="1620.16" y="151.55" width="36.19" height="1.2" fill="#4038e4" />
<rect x="1620.16" y="158.92" width="36.19" height="1.2" fill="#4038e4" />
<rect x="1620.16" y="166.29" width="36.19" height="1.2" fill="#4038e4" />
<rect x="1661.35" y="142" width="36.19" height="33.5" fill="url(#pcell)" />
<rect x="1661.35" y="152.05" width="36.19" height="14.74" fill="url(#pxh)" />
<rect x="1661.35" y="151.55" width="36.19" height="1.2" fill="#4038e4" />
<rect x="1661.35" y="158.92" width="36.19" height="1.2" fill="#4038e4" />
<rect x="1661.35" y="166.29" width="36.19" height="1.2" fill="#4038e4" />
<rect x="1268.5" y="204" width="165.8" height="39" fill="#e41028" />
<rect x="1268" y="203.5" width="166.8" height="40" fill="none" stroke="#b8b0ff" stroke-width="1"/>
<rect x="1273.5" y="207" width="35.2" height="32.5" fill="url(#pcell)" />
<rect x="1273.5" y="216.75" width="35.2" height="14.3" fill="url(#pxh)" />
<rect x="1273.5" y="216.25" width="35.2" height="1.2" fill="#4038e4" />
<rect x="1273.5" y="223.4" width="35.2" height="1.2" fill="#4038e4" />
<rect x="1273.5" y="230.55" width="35.2" height="1.2" fill="#4038e4" />
<rect x="1313.7" y="207" width="35.2" height="32.5" fill="url(#pcell)" />
<rect x="1313.7" y="216.75" width="35.2" height="14.3" fill="url(#pxh)" />
<rect x="1313.7" y="216.25" width="35.2" height="1.2" fill="#4038e4" />
<rect x="1313.7" y="223.4" width="35.2" height="1.2" fill="#4038e4" />
<rect x="1313.7" y="230.55" width="35.2" height="1.2" fill="#4038e4" />
<rect x="1353.9" y="207" width="35.2" height="32.5" fill="url(#pcell)" />
<rect x="1353.9" y="216.75" width="35.2" height="14.3" fill="url(#pxh)" />
<rect x="1353.9" y="216.25" width="35.2" height="1.2" fill="#4038e4" />
<rect x="1353.9" y="223.4" width="35.2" height="1.2" fill="#4038e4" />
<rect x="1353.9" y="230.55" width="35.2" height="1.2" fill="#4038e4" />
<rect x="1394.1" y="207" width="35.2" height="32.5" fill="url(#pcell)" />
<rect x="1394.1" y="216.75" width="35.2" height="14.3" fill="url(#pxh)" />
<rect x="1394.1" y="216.25" width="35.2" height="1.2" fill="#4038e4" />
<rect x="1394.1" y="223.4" width="35.2" height="1.2" fill="#4038e4" />
<rect x="1394.1" y="230.55" width="35.2" height="1.2" fill="#4038e4" />
<rect x="1495" y="204" width="42" height="212" fill="#e41028" />
<rect x="1494.5" y="203.5" width="43" height="213" fill="none" stroke="#b8b0ff" stroke-width="1"/>
<rect x="1498" y="208" width="36" height="37.6" fill="url(#pcell)" />
<rect x="1508.8" y="208" width="15.84" height="37.6" fill="url(#pxh)" />
<rect x="1508.3" y="208" width="1.2" height="37.6" fill="#4038e4" />
<rect x="1516.22" y="208" width="1.2" height="37.6" fill="#4038e4" />
<rect x="1524.14" y="208" width="1.2" height="37.6" fill="#4038e4" />
<rect x="1498" y="249.6" width="36" height="37.6" fill="url(#pcell)" />
<rect x="1508.8" y="249.6" width="15.84" height="37.6" fill="url(#pxh)" />
<rect x="1508.3" y="249.6" width="1.2" height="37.6" fill="#4038e4" />
<rect x="1516.22" y="249.6" width="1.2" height="37.6" fill="#4038e4" />
<rect x="1524.14" y="249.6" width="1.2" height="37.6" fill="#4038e4" />
<rect x="1498" y="291.2" width="36" height="37.6" fill="url(#pcell)" />
<rect x="1508.8" y="291.2" width="15.84" height="37.6" fill="url(#pxh)" />
<rect x="1508.3" y="291.2" width="1.2" height="37.6" fill="#4038e4" />
<rect x="1516.22" y="291.2" width="1.2" height="37.6" fill="#4038e4" />
<rect x="1524.14" y="291.2" width="1.2" height="37.6" fill="#4038e4" />
<rect x="1498" y="332.8" width="36" height="37.6" fill="url(#pcell)" />
<rect x="1508.8" y="332.8" width="15.84" height="37.6" fill="url(#pxh)" />
<rect x="1508.3" y="332.8" width="1.2" height="37.6" fill="#4038e4" />
<rect x="1516.22" y="332.8" width="1.2" height="37.6" fill="#4038e4" />
<rect x="1524.14" y="332.8" width="1.2" height="37.6" fill="#4038e4" />
<rect x="1498" y="374.4" width="36" height="37.6" fill="url(#pcell)" />
<rect x="1508.8" y="374.4" width="15.84" height="37.6" fill="url(#pxh)" />
<rect x="1508.3" y="374.4" width="1.2" height="37.6" fill="#4038e4" />
<rect x="1516.22" y="374.4" width="1.2" height="37.6" fill="#4038e4" />
<rect x="1524.14" y="374.4" width="1.2" height="37.6" fill="#4038e4" />
<rect x="1538" y="204" width="42" height="212" fill="#e41028" />
<rect x="1537.5" y="203.5" width="43" height="213" fill="none" stroke="#b8b0ff" stroke-width="1"/>
<rect x="1541" y="208" width="36" height="37.6" fill="url(#pcell)" />
<rect x="1551.8" y="208" width="15.84" height="37.6" fill="url(#pxh)" />
<rect x="1551.3" y="208" width="1.2" height="37.6" fill="#4038e4" />
<rect x="1559.22" y="208" width="1.2" height="37.6" fill="#4038e4" />
<rect x="1567.14" y="208" width="1.2" height="37.6" fill="#4038e4" />
<rect x="1541" y="249.6" width="36" height="37.6" fill="url(#pcell)" />
<rect x="1551.8" y="249.6" width="15.84" height="37.6" fill="url(#pxh)" />
<rect x="1551.3" y="249.6" width="1.2" height="37.6" fill="#4038e4" />
<rect x="1559.22" y="249.6" width="1.2" height="37.6" fill="#4038e4" />
<rect x="1567.14" y="249.6" width="1.2" height="37.6" fill="#4038e4" />
<rect x="1541" y="291.2" width="36" height="37.6" fill="url(#pcell)" />
<rect x="1551.8" y="291.2" width="15.84" height="37.6" fill="url(#pxh)" />
<rect x="1551.3" y="291.2" width="1.2" height="37.6" fill="#4038e4" />
<rect x="1559.22" y="291.2" width="1.2" height="37.6" fill="#4038e4" />
<rect x="1567.14" y="291.2" width="1.2" height="37.6" fill="#4038e4" />
<rect x="1541" y="332.8" width="36" height="37.6" fill="url(#pcell)" />
<rect x="1551.8" y="332.8" width="15.84" height="37.6" fill="url(#pxh)" />
<rect x="1551.3" y="332.8" width="1.2" height="37.6" fill="#4038e4" />
<rect x="1559.22" y="332.8" width="1.2" height="37.6" fill="#4038e4" />
<rect x="1567.14" y="332.8" width="1.2" height="37.6" fill="#4038e4" />
<rect x="1541" y="374.4" width="36" height="37.6" fill="url(#pcell)" />
<rect x="1551.8" y="374.4" width="15.84" height="37.6" fill="url(#pxh)" />
<rect x="1551.3" y="374.4" width="1.2" height="37.6" fill="#4038e4" />
<rect x="1559.22" y="374.4" width="1.2" height="37.6" fill="#4038e4" />
<rect x="1567.14" y="374.4" width="1.2" height="37.6" fill="#4038e4" />
<rect x="1588" y="204" width="42" height="212" fill="#e41028" />
<rect x="1587.5" y="203.5" width="43" height="213" fill="none" stroke="#b8b0ff" stroke-width="1"/>
<rect x="1591" y="208" width="36" height="37.6" fill="url(#pcell)" />
<rect x="1601.8" y="208" width="15.84" height="37.6" fill="url(#pxh)" />
<rect x="1601.3" y="208" width="1.2" height="37.6" fill="#4038e4" />
<rect x="1609.22" y="208" width="1.2" height="37.6" fill="#4038e4" />
<rect x="1617.14" y="208" width="1.2" height="37.6" fill="#4038e4" />
<rect x="1591" y="249.6" width="36" height="37.6" fill="url(#pcell)" />
<rect x="1601.8" y="249.6" width="15.84" height="37.6" fill="url(#pxh)" />
<rect x="1601.3" y="249.6" width="1.2" height="37.6" fill="#4038e4" />
<rect x="1609.22" y="249.6" width="1.2" height="37.6" fill="#4038e4" />
<rect x="1617.14" y="249.6" width="1.2" height="37.6" fill="#4038e4" />
<rect x="1591" y="291.2" width="36" height="37.6" fill="url(#pcell)" />
<rect x="1601.8" y="291.2" width="15.84" height="37.6" fill="url(#pxh)" />
<rect x="1601.3" y="291.2" width="1.2" height="37.6" fill="#4038e4" />
<rect x="1609.22" y="291.2" width="1.2" height="37.6" fill="#4038e4" />
<rect x="1617.14" y="291.2" width="1.2" height="37.6" fill="#4038e4" />
<rect x="1591" y="332.8" width="36" height="37.6" fill="url(#pcell)" />
<rect x="1601.8" y="332.8" width="15.84" height="37.6" fill="url(#pxh)" />
<rect x="1601.3" y="332.8" width="1.2" height="37.6" fill="#4038e4" />
<rect x="1609.22" y="332.8" width="1.2" height="37.6" fill="#4038e4" />
<rect x="1617.14" y="332.8" width="1.2" height="37.6" fill="#4038e4" />
<rect x="1591" y="374.4" width="36" height="37.6" fill="url(#pcell)" />
<rect x="1601.8" y="374.4" width="15.84" height="37.6" fill="url(#pxh)" />
<rect x="1601.3" y="374.4" width="1.2" height="37.6" fill="#4038e4" />
<rect x="1609.22" y="374.4" width="1.2" height="37.6" fill="#4038e4" />
<rect x="1617.14" y="374.4" width="1.2" height="37.6" fill="#4038e4" />
<rect x="1631" y="204" width="42" height="212" fill="#e41028" />
<rect x="1630.5" y="203.5" width="43" height="213" fill="none" stroke="#b8b0ff" stroke-width="1"/>
<rect x="1634" y="208" width="36" height="37.6" fill="url(#pcell)" />
<rect x="1644.8" y="208" width="15.84" height="37.6" fill="url(#pxh)" />
<rect x="1644.3" y="208" width="1.2" height="37.6" fill="#4038e4" />
<rect x="1652.22" y="208" width="1.2" height="37.6" fill="#4038e4" />
<rect x="1660.14" y="208" width="1.2" height="37.6" fill="#4038e4" />
<rect x="1634" y="249.6" width="36" height="37.6" fill="url(#pcell)" />
<rect x="1644.8" y="249.6" width="15.84" height="37.6" fill="url(#pxh)" />
<rect x="1644.3" y="249.6" width="1.2" height="37.6" fill="#4038e4" />
<rect x="1652.22" y="249.6" width="1.2" height="37.6" fill="#4038e4" />
<rect x="1660.14" y="249.6" width="1.2" height="37.6" fill="#4038e4" />
<rect x="1634" y="291.2" width="36" height="37.6" fill="url(#pcell)" />
<rect x="1644.8" y="291.2" width="15.84" height="37.6" fill="url(#pxh)" />
<rect x="1644.3" y="291.2" width="1.2" height="37.6" fill="#4038e4" />
<rect x="1652.22" y="291.2" width="1.2" height="37.6" fill="#4038e4" />
<rect x="1660.14" y="291.2" width="1.2" height="37.6" fill="#4038e4" />
<rect x="1634" y="332.8" width="36" height="37.6" fill="url(#pcell)" />
<rect x="1644.8" y="332.8" width="15.84" height="37.6" fill="url(#pxh)" />
<rect x="1644.3" y="332.8" width="1.2" height="37.6" fill="#4038e4" />
<rect x="1652.22" y="332.8" width="1.2" height="37.6" fill="#4038e4" />
<rect x="1660.14" y="332.8" width="1.2" height="37.6" fill="#4038e4" />
<rect x="1634" y="374.4" width="36" height="37.6" fill="url(#pcell)" />
<rect x="1644.8" y="374.4" width="15.84" height="37.6" fill="url(#pxh)" />
<rect x="1644.3" y="374.4" width="1.2" height="37.6" fill="#4038e4" />
<rect x="1652.22" y="374.4" width="1.2" height="37.6" fill="#4038e4" />
<rect x="1660.14" y="374.4" width="1.2" height="37.6" fill="#4038e4" />
<path d="M1508.5 192L1508.5 204" stroke="#4a1ed0" stroke-width="1"/>
<path d="M1514.5 192L1514.5 204" stroke="#4a1ed0" stroke-width="1"/>
<path d="M1522.5 192L1522.5 204" stroke="#4a1ed0" stroke-width="1"/>
<path d="M1551.5 192L1551.5 204" stroke="#4a1ed0" stroke-width="1"/>
<path d="M1557.5 192L1557.5 204" stroke="#4a1ed0" stroke-width="1"/>
<path d="M1565.5 192L1565.5 204" stroke="#4a1ed0" stroke-width="1"/>
<path d="M1601.5 192L1601.5 204" stroke="#4a1ed0" stroke-width="1"/>
<path d="M1607.5 192L1607.5 204" stroke="#4a1ed0" stroke-width="1"/>
<path d="M1615.5 192L1615.5 204" stroke="#4a1ed0" stroke-width="1"/>
<path d="M1644.5 192L1644.5 204" stroke="#4a1ed0" stroke-width="1"/>
<path d="M1650.5 192L1650.5 204" stroke="#4a1ed0" stroke-width="1"/>
<path d="M1658.5 192L1658.5 204" stroke="#4a1ed0" stroke-width="1"/>
<rect x="1490" y="418" width="232" height="13" fill="url(#phat)" />
<path d="M1490 418.5L1722 418.5" stroke="#4a1ed0" stroke-width="1"/>
<path d="M1490 424.5L1722 424.5" stroke="#4a1ed0" stroke-width="1"/>
<path d="M1490 430.5L1722 430.5" stroke="#4a1ed0" stroke-width="1"/>
<rect x="1700" y="418" width="22" height="13" fill="url(#phat)" />
<rect x="1031" y="225" width="134" height="42" fill="url(#pfing)" />
<path d="M1031 244H1165" stroke="#fce0f0" stroke-width="3" stroke-dasharray="3 4"/>
<rect x="1030.5" y="224.5" width="135" height="43" fill="none" stroke="#d8a0e8" stroke-width="1"/>
<rect x="1165" y="225" width="91" height="41" fill="#fa0408" />
<path d="M1184.5 226L1184.5 265" stroke="#f8a0b0" stroke-width="1"/>
<path d="M1197.5 226L1197.5 265" stroke="#f8a0b0" stroke-width="1"/>
<path d="M1232.5 226L1232.5 265" stroke="#f8a0b0" stroke-width="1"/>
<path d="M1245.5 226L1245.5 265" stroke="#f8a0b0" stroke-width="1"/>
<rect x="1165.5" y="224.5" width="91" height="42" fill="none" stroke="#b090f0" stroke-width="1" stroke-dasharray="2 2"/>
<rect x="1162" y="225" width="4" height="42" fill="url(#pbh)" />
<rect x="1033" y="282" width="403" height="61.5" fill="#50c0f2" />
<rect x="1037" y="285" width="391" height="55.5" fill="#32b2f2" />
<path d="M1038.5 285V340.5M1047.5 285V340.5M1057.5 285V340.5M1066.5 285V340.5M1076.5 285V340.5M1085.5 285V340.5M1095.5 285V340.5M1104.5 285V340.5M1114.5 285V340.5M1123.5 285V340.5M1133.5 285V340.5M1142.5 285V340.5M1151.5 285V340.5M1161.5 285V340.5M1170.5 285V340.5M1180.5 285V340.5M1189.5 285V340.5M1199.5 285V340.5M1208.5 285V340.5M1218.5 285V340.5M1227.5 285V340.5M1236.5 285V340.5M1246.5 285V340.5M1255.5 285V340.5M1265.5 285V340.5M1274.5 285V340.5M1284.5 285V340.5M1293.5 285V340.5M1303.5 285V340.5M1312.5 285V340.5M1321.5 285V340.5M1331.5 285V340.5M1340.5 285V340.5M1350.5 285V340.5M1359.5 285V340.5M1369.5 285V340.5M1378.5 285V340.5M1388.5 285V340.5M1397.5 285V340.5M1407.5 285V340.5M1416.5 285V340.5M1425.5 285V340.5" stroke="#6cccf0" stroke-width="1" fill="none"/>
<path d="M1037.5 285V340.5M1039.5 285V340.5M1046.5 285V340.5M1048.5 285V340.5M1056.5 285V340.5M1058.5 285V340.5M1065.5 285V340.5M1067.5 285V340.5M1075.5 285V340.5M1077.5 285V340.5M1084.5 285V340.5M1086.5 285V340.5M1094.5 285V340.5M1096.5 285V340.5M1103.5 285V340.5M1105.5 285V340.5M1113.5 285V340.5M1115.5 285V340.5M1122.5 285V340.5M1124.5 285V340.5M1132.5 285V340.5M1134.5 285V340.5M1141.5 285V340.5M1143.5 285V340.5M1150.5 285V340.5M1152.5 285V340.5M1160.5 285V340.5M1162.5 285V340.5M1169.5 285V340.5M1171.5 285V340.5M1179.5 285V340.5M1181.5 285V340.5M1188.5 285V340.5M1190.5 285V340.5M1198.5 285V340.5M1200.5 285V340.5M1207.5 285V340.5M1209.5 285V340.5M1217.5 285V340.5M1219.5 285V340.5M1226.5 285V340.5M1228.5 285V340.5M1235.5 285V340.5M1237.5 285V340.5M1245.5 285V340.5M1247.5 285V340.5M1254.5 285V340.5M1256.5 285V340.5M1264.5 285V340.5M1266.5 285V340.5M1273.5 285V340.5M1275.5 285V340.5M1283.5 285V340.5M1285.5 285V340.5M1292.5 285V340.5M1294.5 285V340.5M1302.5 285V340.5M1304.5 285V340.5M1311.5 285V340.5M1313.5 285V340.5M1320.5 285V340.5M1322.5 285V340.5M1330.5 285V340.5M1332.5 285V340.5M1339.5 285V340.5M1341.5 285V340.5M1349.5 285V340.5M1351.5 285V340.5M1358.5 285V340.5M1360.5 285V340.5M1368.5 285V340.5M1370.5 285V340.5M1377.5 285V340.5M1379.5 285V340.5M1387.5 285V340.5M1389.5 285V340.5M1396.5 285V340.5M1398.5 285V340.5M1406.5 285V340.5M1408.5 285V340.5M1415.5 285V340.5M1417.5 285V340.5M1424.5 285V340.5M1426.5 285V340.5" stroke="#d4f87c" stroke-width="1" fill="none"/>
<rect x="1036" y="284" width="392" height="1" fill="#d4f87c" />
<rect x="1036" y="340.5" width="392" height="1" fill="#d4f87c" />
<rect x="1427.5" y="284" width="8" height="57.5" fill="url(#pbh)" />
<rect x="1033" y="350" width="403" height="61" fill="#50c0f2" />
<rect x="1037" y="353" width="391" height="55" fill="#32b2f2" />
<path d="M1038.5 353V408M1047.5 353V408M1057.5 353V408M1066.5 353V408M1076.5 353V408M1085.5 353V408M1095.5 353V408M1104.5 353V408M1114.5 353V408M1123.5 353V408M1133.5 353V408M1142.5 353V408M1151.5 353V408M1161.5 353V408M1170.5 353V408M1180.5 353V408M1189.5 353V408M1199.5 353V408M1208.5 353V408M1218.5 353V408M1227.5 353V408M1236.5 353V408M1246.5 353V408M1255.5 353V408M1265.5 353V408M1274.5 353V408M1284.5 353V408M1293.5 353V408M1303.5 353V408M1312.5 353V408M1321.5 353V408M1331.5 353V408M1340.5 353V408M1350.5 353V408M1359.5 353V408M1369.5 353V408M1378.5 353V408M1388.5 353V408M1397.5 353V408M1407.5 353V408M1416.5 353V408M1425.5 353V408" stroke="#6cccf0" stroke-width="1" fill="none"/>
<path d="M1037.5 353V408M1039.5 353V408M1046.5 353V408M1048.5 353V408M1056.5 353V408M1058.5 353V408M1065.5 353V408M1067.5 353V408M1075.5 353V408M1077.5 353V408M1084.5 353V408M1086.5 353V408M1094.5 353V408M1096.5 353V408M1103.5 353V408M1105.5 353V408M1113.5 353V408M1115.5 353V408M1122.5 353V408M1124.5 353V408M1132.5 353V408M1134.5 353V408M1141.5 353V408M1143.5 353V408M1150.5 353V408M1152.5 353V408M1160.5 353V408M1162.5 353V408M1169.5 353V408M1171.5 353V408M1179.5 353V408M1181.5 353V408M1188.5 353V408M1190.5 353V408M1198.5 353V408M1200.5 353V408M1207.5 353V408M1209.5 353V408M1217.5 353V408M1219.5 353V408M1226.5 353V408M1228.5 353V408M1235.5 353V408M1237.5 353V408M1245.5 353V408M1247.5 353V408M1254.5 353V408M1256.5 353V408M1264.5 353V408M1266.5 353V408M1273.5 353V408M1275.5 353V408M1283.5 353V408M1285.5 353V408M1292.5 353V408M1294.5 353V408M1302.5 353V408M1304.5 353V408M1311.5 353V408M1313.5 353V408M1320.5 353V408M1322.5 353V408M1330.5 353V408M1332.5 353V408M1339.5 353V408M1341.5 353V408M1349.5 353V408M1351.5 353V408M1358.5 353V408M1360.5 353V408M1368.5 353V408M1370.5 353V408M1377.5 353V408M1379.5 353V408M1387.5 353V408M1389.5 353V408M1396.5 353V408M1398.5 353V408M1406.5 353V408M1408.5 353V408M1415.5 353V408M1417.5 353V408M1424.5 353V408M1426.5 353V408" stroke="#d4f87c" stroke-width="1" fill="none"/>
<rect x="1036" y="352" width="392" height="1" fill="#d4f87c" />
<rect x="1036" y="408" width="392" height="1" fill="#d4f87c" />
<rect x="1427.5" y="352" width="8" height="57" fill="url(#pbh)" />
<rect x="1033" y="420" width="403" height="59" fill="#50c0f2" />
<rect x="1037" y="423" width="391" height="53" fill="#32b2f2" />
<path d="M1038.5 423V476M1047.5 423V476M1057.5 423V476M1066.5 423V476M1076.5 423V476M1085.5 423V476M1095.5 423V476M1104.5 423V476M1114.5 423V476M1123.5 423V476M1133.5 423V476M1142.5 423V476M1151.5 423V476M1161.5 423V476M1170.5 423V476M1180.5 423V476M1189.5 423V476M1199.5 423V476M1208.5 423V476M1218.5 423V476M1227.5 423V476M1236.5 423V476M1246.5 423V476M1255.5 423V476M1265.5 423V476M1274.5 423V476M1284.5 423V476M1293.5 423V476M1303.5 423V476M1312.5 423V476M1321.5 423V476M1331.5 423V476M1340.5 423V476M1350.5 423V476M1359.5 423V476M1369.5 423V476M1378.5 423V476M1388.5 423V476M1397.5 423V476M1407.5 423V476M1416.5 423V476M1425.5 423V476" stroke="#6cccf0" stroke-width="1" fill="none"/>
<path d="M1037.5 423V476M1039.5 423V476M1046.5 423V476M1048.5 423V476M1056.5 423V476M1058.5 423V476M1065.5 423V476M1067.5 423V476M1075.5 423V476M1077.5 423V476M1084.5 423V476M1086.5 423V476M1094.5 423V476M1096.5 423V476M1103.5 423V476M1105.5 423V476M1113.5 423V476M1115.5 423V476M1122.5 423V476M1124.5 423V476M1132.5 423V476M1134.5 423V476M1141.5 423V476M1143.5 423V476M1150.5 423V476M1152.5 423V476M1160.5 423V476M1162.5 423V476M1169.5 423V476M1171.5 423V476M1179.5 423V476M1181.5 423V476M1188.5 423V476M1190.5 423V476M1198.5 423V476M1200.5 423V476M1207.5 423V476M1209.5 423V476M1217.5 423V476M1219.5 423V476M1226.5 423V476M1228.5 423V476M1235.5 423V476M1237.5 423V476M1245.5 423V476M1247.5 423V476M1254.5 423V476M1256.5 423V476M1264.5 423V476M1266.5 423V476M1273.5 423V476M1275.5 423V476M1283.5 423V476M1285.5 423V476M1292.5 423V476M1294.5 423V476M1302.5 423V476M1304.5 423V476M1311.5 423V476M1313.5 423V476M1320.5 423V476M1322.5 423V476M1330.5 423V476M1332.5 423V476M1339.5 423V476M1341.5 423V476M1349.5 423V476M1351.5 423V476M1358.5 423V476M1360.5 423V476M1368.5 423V476M1370.5 423V476M1377.5 423V476M1379.5 423V476M1387.5 423V476M1389.5 423V476M1396.5 423V476M1398.5 423V476M1406.5 423V476M1408.5 423V476M1415.5 423V476M1417.5 423V476M1424.5 423V476M1426.5 423V476" stroke="#d4f87c" stroke-width="1" fill="none"/>
<rect x="1036" y="422" width="392" height="1" fill="#d4f87c" />
<rect x="1036" y="476" width="392" height="1" fill="#d4f87c" />
<rect x="1427.5" y="422" width="8" height="55" fill="url(#pbh)" />
<rect x="1033" y="486.5" width="403" height="60.5" fill="#50c0f2" />
<rect x="1037" y="489.5" width="391" height="54.5" fill="#32b2f2" />
<path d="M1038.5 489.5V544M1047.5 489.5V544M1057.5 489.5V544M1066.5 489.5V544M1076.5 489.5V544M1085.5 489.5V544M1095.5 489.5V544M1104.5 489.5V544M1114.5 489.5V544M1123.5 489.5V544M1133.5 489.5V544M1142.5 489.5V544M1151.5 489.5V544M1161.5 489.5V544M1170.5 489.5V544M1180.5 489.5V544M1189.5 489.5V544M1199.5 489.5V544M1208.5 489.5V544M1218.5 489.5V544M1227.5 489.5V544M1236.5 489.5V544M1246.5 489.5V544M1255.5 489.5V544M1265.5 489.5V544M1274.5 489.5V544M1284.5 489.5V544M1293.5 489.5V544M1303.5 489.5V544M1312.5 489.5V544M1321.5 489.5V544M1331.5 489.5V544M1340.5 489.5V544M1350.5 489.5V544M1359.5 489.5V544M1369.5 489.5V544M1378.5 489.5V544M1388.5 489.5V544M1397.5 489.5V544M1407.5 489.5V544M1416.5 489.5V544M1425.5 489.5V544" stroke="#6cccf0" stroke-width="1" fill="none"/>
<path d="M1037.5 489.5V544M1039.5 489.5V544M1046.5 489.5V544M1048.5 489.5V544M1056.5 489.5V544M1058.5 489.5V544M1065.5 489.5V544M1067.5 489.5V544M1075.5 489.5V544M1077.5 489.5V544M1084.5 489.5V544M1086.5 489.5V544M1094.5 489.5V544M1096.5 489.5V544M1103.5 489.5V544M1105.5 489.5V544M1113.5 489.5V544M1115.5 489.5V544M1122.5 489.5V544M1124.5 489.5V544M1132.5 489.5V544M1134.5 489.5V544M1141.5 489.5V544M1143.5 489.5V544M1150.5 489.5V544M1152.5 489.5V544M1160.5 489.5V544M1162.5 489.5V544M1169.5 489.5V544M1171.5 489.5V544M1179.5 489.5V544M1181.5 489.5V544M1188.5 489.5V544M1190.5 489.5V544M1198.5 489.5V544M1200.5 489.5V544M1207.5 489.5V544M1209.5 489.5V544M1217.5 489.5V544M1219.5 489.5V544M1226.5 489.5V544M1228.5 489.5V544M1235.5 489.5V544M1237.5 489.5V544M1245.5 489.5V544M1247.5 489.5V544M1254.5 489.5V544M1256.5 489.5V544M1264.5 489.5V544M1266.5 489.5V544M1273.5 489.5V544M1275.5 489.5V544M1283.5 489.5V544M1285.5 489.5V544M1292.5 489.5V544M1294.5 489.5V544M1302.5 489.5V544M1304.5 489.5V544M1311.5 489.5V544M1313.5 489.5V544M1320.5 489.5V544M1322.5 489.5V544M1330.5 489.5V544M1332.5 489.5V544M1339.5 489.5V544M1341.5 489.5V544M1349.5 489.5V544M1351.5 489.5V544M1358.5 489.5V544M1360.5 489.5V544M1368.5 489.5V544M1370.5 489.5V544M1377.5 489.5V544M1379.5 489.5V544M1387.5 489.5V544M1389.5 489.5V544M1396.5 489.5V544M1398.5 489.5V544M1406.5 489.5V544M1408.5 489.5V544M1415.5 489.5V544M1417.5 489.5V544M1424.5 489.5V544M1426.5 489.5V544" stroke="#d4f87c" stroke-width="1" fill="none"/>
<rect x="1036" y="488.5" width="392" height="1" fill="#d4f87c" />
<rect x="1036" y="544" width="392" height="1" fill="#d4f87c" />
<rect x="1427.5" y="488.5" width="8" height="56.5" fill="url(#pbh)" />
<rect x="1033" y="343.5" width="403" height="7" fill="#10043c" />
<path d="M1033 347L1436 347" stroke="#3c20c8" stroke-width="2"/>
<rect x="1033" y="411" width="403" height="9" fill="#10043c" />
<path d="M1033 414.5L1436 414.5" stroke="#3c20c8" stroke-width="2"/>
<rect x="1033" y="479" width="403" height="7" fill="#10043c" />
<path d="M1033 482.5L1436 482.5" stroke="#3c20c8" stroke-width="2"/>
<rect x="1229" y="344" width="97" height="6" fill="#000" />
<rect x="1229" y="412" width="51" height="7" fill="#000" />
<rect x="1031" y="268" width="6" height="279" fill="url(#ppink)" />
<rect x="1244" y="341.5" width="190" height="5" fill="url(#ppink)" />
<rect x="1327" y="347.5" width="118" height="4.5" fill="url(#ppink)" />
<rect x="1280" y="408.5" width="160" height="4.5" fill="url(#ppink)" />
<rect x="1280" y="416.5" width="150" height="4.5" fill="url(#ppink)" />
<rect x="1033" y="422" width="410" height="4.5" fill="url(#ppink)" />
<rect x="1240" y="341" width="5" height="11" fill="#f4c4f4" />
<rect x="1219" y="305" width="12" height="18" fill="#f0f028" />
<rect x="1220" y="308" width="9" height="1" fill="#70c8d0" />
<rect x="1220" y="312" width="9" height="1" fill="#70c8d0" />
<rect x="1220" y="316" width="9" height="1" fill="#70c8d0" />
<rect x="1220" y="320" width="9" height="1" fill="#70c8d0" />
<rect x="1224.5" y="306" width="1" height="16" fill="#a8d890" />
<rect x="1219" y="372" width="7" height="18" fill="#f0f028" />
<rect x="1220" y="375" width="4" height="1" fill="#70c8d0" />
<rect x="1220" y="379" width="4" height="1" fill="#70c8d0" />
<rect x="1220" y="383" width="4" height="1" fill="#70c8d0" />
<rect x="1220" y="387" width="4" height="1" fill="#70c8d0" />
<rect x="1222" y="373" width="1" height="16" fill="#a8d890" />
<rect x="1228" y="372" width="7" height="18" fill="#f0f028" />
<rect x="1229" y="375" width="4" height="1" fill="#70c8d0" />
<rect x="1229" y="379" width="4" height="1" fill="#70c8d0" />
<rect x="1229" y="383" width="4" height="1" fill="#70c8d0" />
<rect x="1229" y="387" width="4" height="1" fill="#70c8d0" />
<rect x="1231" y="373" width="1" height="16" fill="#a8d890" />
<rect x="1219" y="441" width="12" height="18" fill="#f0f028" />
<rect x="1220" y="444" width="9" height="1" fill="#70c8d0" />
<rect x="1220" y="448" width="9" height="1" fill="#70c8d0" />
<rect x="1220" y="452" width="9" height="1" fill="#70c8d0" />
<rect x="1220" y="456" width="9" height="1" fill="#70c8d0" />
<rect x="1224.5" y="442" width="1" height="16" fill="#a8d890" />
<rect x="1219" y="509" width="12" height="18" fill="#f0f028" />
<rect x="1220" y="512" width="9" height="1" fill="#70c8d0" />
<rect x="1220" y="516" width="9" height="1" fill="#70c8d0" />
<rect x="1220" y="520" width="9" height="1" fill="#70c8d0" />
<rect x="1220" y="524" width="9" height="1" fill="#70c8d0" />
<rect x="1224.5" y="510" width="1" height="16" fill="#a8d890" />
<rect x="1424" y="305" width="6" height="18" fill="#f0f028" />
<rect x="1425" y="308" width="3" height="1" fill="#70c8d0" />
<rect x="1425" y="312" width="3" height="1" fill="#70c8d0" />
<rect x="1425" y="316" width="3" height="1" fill="#70c8d0" />
<rect x="1425" y="320" width="3" height="1" fill="#70c8d0" />
<rect x="1426.5" y="306" width="1" height="16" fill="#a8d890" />
<rect x="1430" y="372" width="6" height="18" fill="#f0f028" />
<rect x="1431" y="375" width="3" height="1" fill="#70c8d0" />
<rect x="1431" y="379" width="3" height="1" fill="#70c8d0" />
<rect x="1431" y="383" width="3" height="1" fill="#70c8d0" />
<rect x="1431" y="387" width="3" height="1" fill="#70c8d0" />
<rect x="1432.5" y="373" width="1" height="16" fill="#a8d890" />
<rect x="1424" y="441" width="6" height="18" fill="#f0f028" />
<rect x="1425" y="444" width="3" height="1" fill="#70c8d0" />
<rect x="1425" y="448" width="3" height="1" fill="#70c8d0" />
<rect x="1425" y="452" width="3" height="1" fill="#70c8d0" />
<rect x="1425" y="456" width="3" height="1" fill="#70c8d0" />
<rect x="1426.5" y="442" width="1" height="16" fill="#a8d890" />
<rect x="1424" y="509" width="6" height="18" fill="#f0f028" />
<rect x="1425" y="512" width="3" height="1" fill="#70c8d0" />
<rect x="1425" y="516" width="3" height="1" fill="#70c8d0" />
<rect x="1425" y="520" width="3" height="1" fill="#70c8d0" />
<rect x="1425" y="524" width="3" height="1" fill="#70c8d0" />
<rect x="1426.5" y="510" width="1" height="16" fill="#a8d890" />
<rect x="1211" y="333" width="6" height="7" fill="url(#pbh)" />
<rect x="1221" y="333" width="6" height="7" fill="url(#pbh)" />
<rect x="1231" y="333" width="6" height="7" fill="url(#pbh)" />
<rect x="1239" y="333" width="6" height="7" fill="url(#pbh)" />
<rect x="1211" y="353" width="6" height="7" fill="url(#pbh)" />
<rect x="1221" y="353" width="6" height="7" fill="url(#pbh)" />
<rect x="1231" y="353" width="6" height="7" fill="url(#pbh)" />
<rect x="1239" y="353" width="6" height="7" fill="url(#pbh)" />
<rect x="1211" y="468" width="6" height="7" fill="url(#pbh)" />
<rect x="1221" y="468" width="6" height="7" fill="url(#pbh)" />
<rect x="1231" y="468" width="6" height="7" fill="url(#pbh)" />
<rect x="1239" y="468" width="6" height="7" fill="url(#pbh)" />
<rect x="1211" y="536" width="6" height="7" fill="url(#pbh)" />
<rect x="1221" y="536" width="6" height="7" fill="url(#pbh)" />
<rect x="1231" y="536" width="6" height="7" fill="url(#pbh)" />
<rect x="1239" y="536" width="6" height="7" fill="url(#pbh)" />
<rect x="1436" y="283" width="8" height="266" fill="#1a0a58" />
<rect x="1446" y="283" width="27" height="120" fill="#18a028" />
<path d="M1452.5 283L1452.5 403" stroke="#5a30c8" stroke-width="1"/>
<path d="M1460.5 283L1460.5 403" stroke="#5a30c8" stroke-width="1"/>
<path d="M1467.5 283L1467.5 403" stroke="#5a30c8" stroke-width="1"/>
<rect x="1441" y="178" width="29" height="105" fill="url(#ppdash)" />
<rect x="1441" y="283" width="5" height="52" fill="url(#ppdash)" />
<rect x="1468" y="283" width="8" height="266" fill="#2a1470" />
<path d="M1469.5 283L1469.5 549" stroke="#6a40e0" stroke-width="1"/>
<path d="M1473.5 283L1473.5 549" stroke="#6a40e0" stroke-width="1"/>
<rect x="1475" y="283" width="11" height="320" fill="url(#phat)" />
<rect x="1444" y="403" width="31" height="146" fill="#2c1678" />
<rect x="1448" y="403" width="4" height="146" fill="#cbb4e4" />
<rect x="1449.5" y="403" width="1" height="146" fill="#50389c" />
<rect x="1456" y="403" width="4" height="146" fill="#cbb4e4" />
<rect x="1457.5" y="403" width="1" height="146" fill="#50389c" />
<rect x="1463" y="403" width="4" height="146" fill="#cbb4e4" />
<rect x="1464.5" y="403" width="1" height="146" fill="#50389c" />
<rect x="1443" y="546" width="33" height="3" fill="#e8b0e0" />
<rect x="1478" y="215" width="103" height="7.5" fill="#f8d8f8" />
<rect x="1478" y="237" width="197" height="7.5" fill="#f8d8f8" />
<rect x="1480" y="217" width="14" height="4" fill="#222" />
<rect x="1480" y="239" width="14" height="4" fill="#222" />
<rect x="1494" y="217.5" width="86" height="2.5" fill="url(#ppink)" />
<rect x="1494" y="239.5" width="180" height="2.5" fill="url(#ppink)" />
<rect x="1285" y="132" width="6" height="6" fill="#f4c0f4" />
<rect x="1285" y="180" width="6" height="93" fill="#f4c0f4" />
<rect x="1287" y="182" width="2" height="89" fill="url(#ppink)" />
<rect x="1285" y="138" width="1" height="42" fill="#f0a0c0" stroke-dasharray="2 2"/>
<rect x="1290" y="138" width="1" height="42" fill="#f0a0c0" />
<rect x="1269" y="178" width="8" height="72" fill="#f4c0f4" />
<rect x="1271" y="181" width="4" height="66" fill="url(#phat)" />
<rect x="1031" y="559" width="142" height="21" fill="url(#pfing2)" />
<path d="M1031 569H1173" stroke="#fce0f0" stroke-width="3" stroke-dasharray="3 2"/>
<rect x="1031" y="580" width="140" height="37" fill="url(#phat)" />
<path d="M1031 580.5L1171 580.5" stroke="#4a1ed0" stroke-width="1"/>
<path d="M1031 588.5L1171 588.5" stroke="#4a1ed0" stroke-width="1"/>
<path d="M1031 596.5L1171 596.5" stroke="#4a1ed0" stroke-width="1"/>
<path d="M1031 603.5L1171 603.5" stroke="#4a1ed0" stroke-width="1"/>
<path d="M1031 610.5L1171 610.5" stroke="#4a1ed0" stroke-width="1"/>
<path d="M1031 616.5L1171 616.5" stroke="#4a1ed0" stroke-width="1"/>
<path d="M1031.5 580L1031.5 617" stroke="#4a1ed0" stroke-width="1"/>
<path d="M1080.5 580L1080.5 617" stroke="#4a1ed0" stroke-width="1"/>
<path d="M1088.5 580L1088.5 617" stroke="#4a1ed0" stroke-width="1"/>
<path d="M1095.5 580L1095.5 617" stroke="#4a1ed0" stroke-width="1"/>
<path d="M1152.5 580L1152.5 617" stroke="#4a1ed0" stroke-width="1"/>
<path d="M1160.5 580L1160.5 617" stroke="#4a1ed0" stroke-width="1"/>
<path d="M1170.5 580L1170.5 617" stroke="#4a1ed0" stroke-width="1"/>
<rect x="1181.5" y="556" width="4.5" height="69" fill="#f4c0f4" />
<rect x="1189" y="564" width="270" height="6" fill="#14064a" />
<path d="M1189 564.5L1459 564.5" stroke="#4a1ed0" stroke-width="1"/>
<path d="M1189 569.5L1459 569.5" stroke="#4a1ed0" stroke-width="1"/>
<rect x="1225" y="549" width="5" height="16" fill="url(#pring)" />
<rect x="1186" y="576" width="280" height="30" fill="url(#phat)" />
<rect x="1189" y="579" width="269.4" height="23" fill="#e81018" />
<rect x="1192" y="582" width="18.7" height="17" fill="url(#prg)" />
<rect x="1214.2" y="582" width="18.7" height="17" fill="url(#prg)" />
<rect x="1236.4" y="582" width="18.7" height="17" fill="url(#prg)" />
<rect x="1258.6" y="582" width="18.7" height="17" fill="url(#prg)" />
<rect x="1280.8" y="582" width="18.7" height="17" fill="url(#prg)" />
<rect x="1303" y="582" width="18.7" height="17" fill="url(#prg)" />
<rect x="1325.2" y="582" width="18.7" height="17" fill="url(#prg)" />
<rect x="1347.4" y="582" width="18.7" height="17" fill="url(#prg)" />
<rect x="1369.6" y="582" width="18.7" height="17" fill="url(#prg)" />
<rect x="1391.8" y="582" width="18.7" height="17" fill="url(#prg)" />
<rect x="1414" y="582" width="18.7" height="17" fill="url(#prg)" />
<rect x="1436.2" y="582" width="18.7" height="17" fill="url(#prg)" />
<rect x="1189" y="603" width="272" height="14" fill="#1c0850" />
<path d="M1189 604.5L1461 604.5" stroke="#9a2070" stroke-width="1"/>
<path d="M1189 608.5L1461 608.5" stroke="#9a2070" stroke-width="1"/>
<path d="M1189 612.5L1461 612.5" stroke="#9a2070" stroke-width="1"/>
<rect x="1189" y="619" width="520" height="8" fill="#12043c" />
<path d="M1189 620.5L1709 620.5" stroke="#4a1ed0" stroke-width="1"/>
<path d="M1189 624.5L1709 624.5" stroke="#4a1ed0" stroke-width="1"/>
<rect x="1128" y="629" width="582.8" height="23" fill="#e81018" />
<rect x="1131" y="632" width="18.8" height="17" fill="url(#prg)" />
<rect x="1153.3" y="632" width="18.8" height="17" fill="url(#prg)" />
<rect x="1175.6" y="632" width="18.8" height="17" fill="url(#prg)" />
<rect x="1197.9" y="632" width="18.8" height="17" fill="url(#prg)" />
<rect x="1220.2" y="632" width="18.8" height="17" fill="url(#prg)" />
<rect x="1242.5" y="632" width="18.8" height="17" fill="url(#prg)" />
<rect x="1264.8" y="632" width="18.8" height="17" fill="url(#prg)" />
<rect x="1287.1" y="632" width="18.8" height="17" fill="url(#prg)" />
<rect x="1309.4" y="632" width="18.8" height="17" fill="url(#prg)" />
<rect x="1331.7" y="632" width="18.8" height="17" fill="url(#prg)" />
<rect x="1354" y="632" width="18.8" height="17" fill="url(#prg)" />
<rect x="1376.3" y="632" width="18.8" height="17" fill="url(#prg)" />
<rect x="1398.6" y="632" width="18.8" height="17" fill="url(#prg)" />
<rect x="1420.9" y="632" width="18.8" height="17" fill="url(#prg)" />
<rect x="1443.2" y="632" width="18.8" height="17" fill="url(#prg)" />
<rect x="1465.5" y="632" width="18.8" height="17" fill="url(#prg)" />
<rect x="1487.8" y="632" width="18.8" height="17" fill="url(#prg)" />
<rect x="1510.1" y="632" width="18.8" height="17" fill="url(#prg)" />
<rect x="1532.4" y="632" width="18.8" height="17" fill="url(#prg)" />
<rect x="1554.7" y="632" width="18.8" height="17" fill="url(#prg)" />
<rect x="1577" y="632" width="18.8" height="17" fill="url(#prg)" />
<rect x="1599.3" y="632" width="18.8" height="17" fill="url(#prg)" />
<rect x="1621.6" y="632" width="18.8" height="17" fill="url(#prg)" />
<rect x="1643.9" y="632" width="18.8" height="17" fill="url(#prg)" />
<rect x="1666.2" y="632" width="18.8" height="17" fill="url(#prg)" />
<rect x="1688.5" y="632" width="18.8" height="17" fill="url(#prg)" />
<rect x="1128" y="653" width="582.8" height="23" fill="#e81018" />
<rect x="1131" y="656" width="18.8" height="17" fill="url(#prg)" />
<rect x="1153.3" y="656" width="18.8" height="17" fill="url(#prg)" />
<rect x="1175.6" y="656" width="18.8" height="17" fill="url(#prg)" />
<rect x="1197.9" y="656" width="18.8" height="17" fill="url(#prg)" />
<rect x="1220.2" y="656" width="18.8" height="17" fill="url(#prg)" />
<rect x="1242.5" y="656" width="18.8" height="17" fill="url(#prg)" />
<rect x="1264.8" y="656" width="18.8" height="17" fill="url(#prg)" />
<rect x="1287.1" y="656" width="18.8" height="17" fill="url(#prg)" />
<rect x="1309.4" y="656" width="18.8" height="17" fill="url(#prg)" />
<rect x="1331.7" y="656" width="18.8" height="17" fill="url(#prg)" />
<rect x="1354" y="656" width="18.8" height="17" fill="url(#prg)" />
<rect x="1376.3" y="656" width="18.8" height="17" fill="url(#prg)" />
<rect x="1398.6" y="656" width="18.8" height="17" fill="url(#prg)" />
<rect x="1420.9" y="656" width="18.8" height="17" fill="url(#prg)" />
<rect x="1443.2" y="656" width="18.8" height="17" fill="url(#prg)" />
<rect x="1465.5" y="656" width="18.8" height="17" fill="url(#prg)" />
<rect x="1487.8" y="656" width="18.8" height="17" fill="url(#prg)" />
<rect x="1510.1" y="656" width="18.8" height="17" fill="url(#prg)" />
<rect x="1532.4" y="656" width="18.8" height="17" fill="url(#prg)" />
<rect x="1554.7" y="656" width="18.8" height="17" fill="url(#prg)" />
<rect x="1577" y="656" width="18.8" height="17" fill="url(#prg)" />
<rect x="1599.3" y="656" width="18.8" height="17" fill="url(#prg)" />
<rect x="1621.6" y="656" width="18.8" height="17" fill="url(#prg)" />
<rect x="1643.9" y="656" width="18.8" height="17" fill="url(#prg)" />
<rect x="1666.2" y="656" width="18.8" height="17" fill="url(#prg)" />
<rect x="1688.5" y="656" width="18.8" height="17" fill="url(#prg)" />
<rect x="1127.500" y="628.500" width="583" height="48" fill="none" stroke="#7a30c0" stroke-width="1"/>
<rect x="1709" y="602" width="25" height="70" fill="url(#phat)" />
<path d="M1709 602.5L1734 602.5" stroke="#4a1ed0" stroke-width="1"/>
<path d="M1709 628.5L1734 628.5" stroke="#4a1ed0" stroke-width="1"/>
<path d="M1709 640.5L1734 640.5" stroke="#4a1ed0" stroke-width="1"/>
<path d="M1709 652.5L1734 652.5" stroke="#4a1ed0" stroke-width="1"/>
<path d="M1709 671.5L1734 671.5" stroke="#4a1ed0" stroke-width="1"/>
<path d="M1709.5 602L1709.5 672" stroke="#4a1ed0" stroke-width="1"/>
<path d="M1716.5 602L1716.5 672" stroke="#4a1ed0" stroke-width="1"/>
<path d="M1733.5 602L1733.5 672" stroke="#4a1ed0" stroke-width="1"/>
<rect x="1484" y="422" width="201" height="7" fill="url(#phat)" />
<rect x="1484.5" y="422.5" width="200" height="6" fill="none" stroke="#4a1ed0"/>
<rect x="1484" y="422" width="7" height="194" fill="url(#phat)" />
<rect x="1484.5" y="422.5" width="6" height="193" fill="none" stroke="#4a1ed0"/>
<rect x="1484" y="602" width="201" height="14" fill="url(#phat)" />
<rect x="1484.5" y="602.5" width="200" height="13" fill="none" stroke="#4a1ed0"/>
<rect x="1679" y="422" width="6" height="194" fill="url(#phat)" />
<rect x="1679.5" y="422.5" width="5" height="193" fill="none" stroke="#4a1ed0"/>
<rect x="1490" y="481" width="190" height="10" fill="url(#phat)" />
<rect x="1490.5" y="481.5" width="189" height="9" fill="none" stroke="#4a1ed0"/>
<rect x="1490" y="561" width="190" height="13" fill="url(#phat)" />
<rect x="1490.5" y="561.5" width="189" height="12" fill="none" stroke="#4a1ed0"/>
<rect x="1561" y="494" width="83" height="5" fill="url(#phat)" />
<rect x="1561.5" y="494.5" width="82" height="4" fill="none" stroke="#4a1ed0"/>
<rect x="1561" y="556" width="83" height="5" fill="url(#phat)" />
<rect x="1561.5" y="556.5" width="82" height="4" fill="none" stroke="#4a1ed0"/>
<rect x="1561" y="494" width="5" height="67" fill="url(#phat)" />
<rect x="1561.5" y="494.5" width="4" height="66" fill="none" stroke="#4a1ed0"/>
<rect x="1639" y="494" width="5" height="67" fill="url(#phat)" />
<rect x="1639.5" y="494.5" width="4" height="66" fill="none" stroke="#4a1ed0"/>
<rect x="1684" y="448" width="53" height="5" fill="url(#phat)" />
<rect x="1684.5" y="448.5" width="52" height="4" fill="none" stroke="#4a1ed0"/>
<rect x="1684" y="591" width="53" height="5" fill="url(#phat)" />
<rect x="1684.5" y="591.5" width="52" height="4" fill="none" stroke="#4a1ed0"/>
<rect x="1684" y="448" width="5" height="148" fill="url(#phat)" />
<rect x="1684.5" y="448.5" width="4" height="147" fill="none" stroke="#4a1ed0"/>
<rect x="1732" y="448" width="5" height="148" fill="url(#phat)" />
<rect x="1732.5" y="448.5" width="4" height="147" fill="none" stroke="#4a1ed0"/>
<rect x="1698.5" y="455.500" width="24" height="132" fill="none" stroke="#4a1ed0"/>
<rect x="1694.5" y="452.500" width="32" height="138" fill="none" stroke="#3a16a8"/>
<rect x="1505" y="434" width="161" height="41" fill="#e40c1c" />
<rect x="1508" y="437" width="1.6" height="35" fill="#f8d0e0" />
<rect x="1514.1" y="437" width="1.6" height="35" fill="#f8d0e0" />
<rect x="1520.2" y="437" width="1.6" height="35" fill="#f8d0e0" />
<rect x="1526.3" y="437" width="1.6" height="35" fill="#f8d0e0" />
<rect x="1532.4" y="437" width="1.6" height="35" fill="#f8d0e0" />
<rect x="1538.5" y="437" width="1.6" height="35" fill="#f8d0e0" />
<rect x="1544.6" y="437" width="1.6" height="35" fill="#f8d0e0" />
<rect x="1550.7" y="437" width="1.6" height="35" fill="#f8d0e0" />
<rect x="1556.8" y="437" width="1.6" height="35" fill="#f8d0e0" />
<rect x="1562.9" y="437" width="1.6" height="35" fill="#b8a8d8" />
<rect x="1569" y="437" width="1.6" height="35" fill="#b8a8d8" />
<rect x="1575.1" y="437" width="1.6" height="35" fill="#b8a8d8" />
<rect x="1581.2" y="437" width="1.6" height="35" fill="#b8a8d8" />
<rect x="1587.3" y="437" width="1.6" height="35" fill="#b8a8d8" />
<rect x="1593.4" y="437" width="1.6" height="35" fill="#b8a8d8" />
<rect x="1599.5" y="437" width="1.6" height="35" fill="#b8a8d8" />
<rect x="1605.6" y="437" width="1.6" height="35" fill="#b8a8d8" />
<rect x="1611.7" y="437" width="1.6" height="35" fill="#b8a8d8" />
<rect x="1617.8" y="437" width="1.6" height="35" fill="#b8a8d8" />
<rect x="1623.9" y="437" width="1.6" height="35" fill="#b8a8d8" />
<rect x="1630" y="437" width="1.6" height="35" fill="#b8a8d8" />
<rect x="1636.1" y="437" width="1.6" height="35" fill="#b8a8d8" />
<rect x="1642.2" y="437" width="1.6" height="35" fill="#b8a8d8" />
<rect x="1648.3" y="437" width="1.6" height="35" fill="#b8a8d8" />
<rect x="1654.4" y="437" width="1.6" height="35" fill="#b8a8d8" />
<rect x="1660.5" y="437" width="1.6" height="35" fill="#b8a8d8" />
<rect x="1518" y="436" width="22" height="37" fill="#f80410" />
<rect x="1522" y="440" width="1.5" height="28" fill="#fff" stroke-dasharray="3 2"/>
<rect x="1529" y="440" width="1.5" height="28" fill="#fff" stroke-dasharray="3 2"/>
<rect x="1536" y="440" width="1.5" height="28" fill="#fff" stroke-dasharray="3 2"/>
<rect x="1504.5" y="433.500" width="162" height="42" fill="none" stroke="#a8a0f0"/>
<rect x="1492" y="436" width="11" height="10" fill="#e81020" />
<rect x="1495" y="439" width="5" height="4" fill="#f0a8c0" />
<rect x="1666" y="468" width="12" height="8" fill="#50b0e8" />
<rect x="1494" y="468" width="10" height="7" fill="#4060d0" />
<rect x="1581" y="502.5" width="43" height="20.5" fill="#e81020" />
<rect x="1584" y="504.5" width="1.5" height="16.5" fill="#c8b0e0" />
<rect x="1589.2" y="504.5" width="1.5" height="16.5" fill="#c8b0e0" />
<rect x="1594.4" y="504.5" width="1.5" height="16.5" fill="#c8b0e0" />
<rect x="1599.6" y="504.5" width="1.5" height="16.5" fill="#c8b0e0" />
<rect x="1604.8" y="504.5" width="1.5" height="16.5" fill="#c8b0e0" />
<rect x="1610" y="504.5" width="1.5" height="16.5" fill="#c8b0e0" />
<rect x="1615.2" y="504.5" width="1.5" height="16.5" fill="#c8b0e0" />
<rect x="1620.4" y="504.5" width="1.5" height="16.5" fill="#c8b0e0" />
<rect x="1571" y="502.5" width="5" height="21" fill="#e81020" />
<rect x="1628" y="502.5" width="5" height="20" fill="#e81020" />
<rect x="1581" y="531" width="43" height="20.5" fill="#e81020" />
<rect x="1584" y="533" width="1.5" height="16.5" fill="#c8b0e0" />
<rect x="1589.2" y="533" width="1.5" height="16.5" fill="#c8b0e0" />
<rect x="1594.4" y="533" width="1.5" height="16.5" fill="#c8b0e0" />
<rect x="1599.6" y="533" width="1.5" height="16.5" fill="#c8b0e0" />
<rect x="1604.8" y="533" width="1.5" height="16.5" fill="#c8b0e0" />
<rect x="1610" y="533" width="1.5" height="16.5" fill="#c8b0e0" />
<rect x="1615.2" y="533" width="1.5" height="16.5" fill="#c8b0e0" />
<rect x="1620.4" y="533" width="1.5" height="16.5" fill="#c8b0e0" />
<rect x="1571" y="531" width="5" height="21" fill="#e81020" />
<rect x="1628" y="531" width="5" height="20" fill="#e81020" />
<rect x="1570" y="531" width="6" height="23" fill="#e81020" />
<path d="M1483 264L1483 490L1488.5 490L1488.5 574" fill="none" stroke="#f4b8f4" stroke-width="4.5" stroke-linejoin="miter"/>
<path d="M1494 442L1494 587" fill="none" stroke="#f4b8f4" stroke-width="4" stroke-linejoin="miter"/>
<path d="M1507 466L1507 596" fill="none" stroke="#f4b8f4" stroke-width="3.5" stroke-linejoin="miter"/>
<path d="M1525.5 474L1525.5 506.5L1551 506.5L1551 474" fill="none" stroke="#f4b8f4" stroke-width="4" stroke-linejoin="miter"/>
<path d="M1540.5 508L1540.5 652" fill="none" stroke="#f4b8f4" stroke-width="9" stroke-linejoin="miter"/>
<path d="M1540.500 512L1540.500 650" stroke="#301050" stroke-width="1.500" stroke-dasharray="4 2"/>
<path d="M1564 474L1564 518.5L1573 518.5" fill="none" stroke="#f4b8f4" stroke-width="4.5" stroke-linejoin="miter"/>
<path d="M1576 474L1576 502" fill="none" stroke="#f4b8f4" stroke-width="4" stroke-linejoin="miter"/>
<path d="M1578 527.5L1624.5 527.5" fill="none" stroke="#f4b8f4" stroke-width="3.5" stroke-linejoin="miter"/>
<path d="M1624 505L1641 505L1641 548L1624 548" fill="none" stroke="#f4b8f4" stroke-width="3" stroke-linejoin="miter"/>
<path d="M1624 511L1636 511L1636 542L1624 542" fill="none" stroke="#f4b8f4" stroke-width="2.5" stroke-linejoin="miter"/>
<path d="M1601.5 556L1601.5 585" fill="none" stroke="#f4b8f4" stroke-width="4.5" stroke-linejoin="miter"/>
<path d="M1647.5 467L1647.5 588" fill="none" stroke="#f4b8f4" stroke-width="4" stroke-linejoin="miter"/>
<path d="M1665 478L1665 512L1696 512" fill="none" stroke="#f4b8f4" stroke-width="3.5" stroke-linejoin="miter"/>
<path d="M1669 485L1681 485L1681 503L1696 503" fill="none" stroke="#f4b8f4" stroke-width="3.5" stroke-linejoin="miter"/>
<path d="M1680 513L1680 570L1669 570" fill="none" stroke="#f4b8f4" stroke-width="4" stroke-linejoin="miter"/>
<path d="M1691 652L1691 546.5L1699 546.5" fill="none" stroke="#f4b8f4" stroke-width="4" stroke-linejoin="miter"/>
<path d="M1474 556L1474 575" fill="none" stroke="#f4b8f4" stroke-width="4" stroke-linejoin="miter"/>
<path d="M1421.5 478L1421.5 565L1479.5 565L1479.5 581" fill="none" stroke="#f4b8f4" stroke-width="4.5" stroke-linejoin="miter"/>
<path d="M1470 600L1470 575" fill="none" stroke="#f4b8f4" stroke-width="3" stroke-linejoin="miter"/>
<rect x="1468" y="581" width="12" height="21" fill="#f00810" />
<rect x="1492" y="581" width="12" height="21" fill="#e81018" />
<rect x="1495" y="584" width="6" height="15" fill="#6a8a30" />
<rect x="1523" y="581" width="12.5" height="21" fill="#e81018" />
<rect x="1526" y="584" width="6" height="15" fill="#6a8a30" />
<rect x="1543" y="581" width="106.5" height="21.5" fill="url(#prgc)" />
<rect x="1506" y="596" width="12" height="6" fill="#e06020" />
<rect x="1699.5" y="468.5" width="21" height="4.2" fill="#f8d8f8" />
<rect x="1699.5" y="475" width="27.5" height="4.2" fill="#f8d8f8" />
<rect x="1702" y="487" width="25" height="4.2" fill="#f8d8f8" />
<rect x="1699.5" y="500.5" width="21" height="4.2" fill="#f8d8f8" />
<rect x="1699.5" y="515.5" width="27.5" height="4.2" fill="#f8d8f8" />
<rect x="1699.5" y="525" width="21" height="4.2" fill="#f8d8f8" />
<rect x="1699.5" y="530.7" width="21" height="4.2" fill="#f8d8f8" />
<rect x="1699.5" y="554" width="21" height="4.2" fill="#f8d8f8" />
<rect x="1722" y="487" width="5" height="32.5" fill="#f8d8f8" />
<rect x="1688" y="492" width="8" height="9.5" fill="#e03818" />
<rect x="1690" y="490" width="5" height="3" fill="#50a030" />
<rect x="1688" y="516" width="8" height="13" fill="#d02820" />
<rect x="1689" y="519" width="6" height="4" fill="#50a030" />
<rect x="1702" y="458" width="9" height="5" fill="#58b0e8" />
<rect x="1702" y="482" width="9" height="5" fill="#58b0e8" />
<rect x="1702" y="494" width="9" height="5" fill="#58b0e8" />
<rect x="1702" y="508" width="9" height="5" fill="#58b0e8" />
<rect x="1702" y="538" width="9" height="5" fill="#58b0e8" />
<rect x="1702" y="546" width="9" height="5" fill="#58b0e8" />
<rect x="1702" y="564" width="9" height="5" fill="#58b0e8" />
<rect x="1702" y="578" width="9" height="5" fill="#58b0e8" />
<rect x="1690" y="461" width="9" height="3" fill="#d01840" />
<rect x="1690" y="472" width="9" height="3" fill="#d01840" />
<rect x="1690" y="484" width="9" height="3" fill="#d01840" />
<rect x="1690" y="521" width="9" height="3" fill="#d01840" />
<rect x="1690" y="540" width="9" height="3" fill="#d01840" />
<rect x="1690" y="552" width="9" height="3" fill="#d01840" />
<rect x="1690" y="566" width="9" height="3" fill="#d01840" />
<rect x="1690" y="580" width="9" height="3" fill="#d01840" />
<rect x="1700" y="544" width="10" height="6" fill="#7030c0" />
<rect x="1700" y="562" width="10" height="6" fill="#7030c0" />
<rect x="1700" y="574" width="10" height="6" fill="#7030c0" />
<path d="M945 617.5L1186 617.5" stroke="#fff" stroke-width="1"/>
<path d="M1697 617.5L1804 617.5" stroke="#fff" stroke-width="1"/>
<path d="M1186 617.5L1697 617.5" stroke="#c8b8e8" stroke-width="1"/>
</svg><!--LAYOUT_E--></div>
 <div class="mono abs" style="left:49px;top:675px;line-height:15px">mouse L: mouseSingleSelectPt                M: leHiMousePopUp()                   R: vuiLVSRun()</div>
 <div class="abs" style="left:5px;top:690px;width:898px;height:2px;border-top:1px solid #a0a0a0;border-bottom:1px solid #fbfbfb"></div>
</div>
<div class="win" id="vlog" style="left:122px;top:175px;width:909px;height:726px">
 <div class="tb"><div class="wbtn" style="left:3px;width:17px"><svg width="15" height="14" viewBox="0 0 15 14"><path d="M4 5L7.5 8.5L11 5" stroke="#a2a2a2" stroke-width="2" fill="none"/></svg></div><div class="ttl" style="left:288px;right:auto">/home/weichen/testFc/assuraRUN/LVS/VREF.log</div><div class="wbtn" style="left:887px"><svg width="15" height="14" viewBox="0 0 15 14"><path d="M4.5 4L10.5 10M10.5 4L4.5 10" stroke="#a2a2a2" stroke-width="2"/></svg></div><div class="wbtn" style="left:867px"><svg width="15" height="14" viewBox="0 0 15 14"><rect x="4" y="3.5" width="7" height="6.5" fill="none" stroke="#a2a2a2" stroke-width="1.2"/><rect x="4" y="3" width="7" height="2.2" fill="#a2a2a2"/></svg></div><div class="wbtn" style="left:847px"><svg width="15" height="14" viewBox="0 0 15 14"><rect x="4" y="8" width="7" height="2.6" fill="#a2a2a2"/></svg></div></div>
 <div class="abs raised" style="left:4px;top:22px;width:865px;height:26px"></div>
 <div class="menu" style="left:12px;top:27px">File</div>
 <div class="menu" style="left:832px;top:27px">Help</div>
 <div class="menu" style="left:879px;top:28px">22</div>
 <div class="abs sunken" style="left:4px;top:50px;width:883px;height:653px"></div>
 <div class="mono abs" style="left:8px;top:68px;line-height:14px">************************************************************************
***** avnx terminated normally *****


Finished /home/EDA/assura/tools/assura/bin/avnx

Starting /home/EDA/assura/tools/assura/bin/nvn /home/weichen/testFc/assuraRUN/LVS/VREF.rsf -postExtract -exec1 -cdslib /home/
@(#)$CDS: nvn version av3.1:Production:dfII5.1.41 12/23/2005 04:13 (tux21ee) $
sub-version 3.1.5, integ signature 2005-11-24-0654n
run on localhost.localdomain at Tue Nov  8 09:40:20 2011

Assura LVS run starting...
Reading schematic network
Reading layout network
 inputting network /home/weichen/testFc/assuraRUN/LVS/VREF.ldb
Preprocessing layout network phase 1
Preprocessing schematic network phase 2
Preprocessing layout network phase 2
Comparing invhx4 schematic D0B5_C8801_sch_20111027 vs invhx4 layout D0B5_C8801_layout_20111027
Top cell  VREF schematic D0B5_C8801_sch_20111027 vs VREF layout D0B5_C8801_layout_20111027
 Expanding invhx4: 2 schematic instances versus  1 layout.
 Expanding invhx4: 1 layout instances versus  2 schematic.
Compare errors, please see /home/weichen/testFc/assuraRUN/LVS/VREF.csm and /home/weichen/testFc/assuraRUN/LVS/VREF.cls files.
cpu=0.03m  wall=0.03m  mem=22.25mb

Finished /home/EDA/assura/tools/assura/bin/nvn

Starting /home/EDA/assura/tools/assura/bin/vldbToRpa VREF.snn VREF.tre VREF.cel

Finished /home/EDA/assura/tools/assura/bin/vldbToRpa

Starting /home/EDA/assura/tools/assura/bin/avcallproc /home/weichen/testFc/assuraRUN/LVS/VREF.rsf -trp -exec1

Finished /home/EDA/assura/tools/assura/bin/avcallproc


Assura LVS terminated normally.



Run ended: Tue Nov  8 09:40:21 2011

*****  Assura terminated normally  *****
</div>
 <div class="abs" style="left:8px;top:207px;width:485px;height:13px;background:#fff;border-radius:3px 2px 2px 4px/5px 2px 2px 5px"></div>
 <div class="abs" style="left:8px;top:206px;width:120px;height:3px;background:#e6e6e6;transform:rotate(.6deg);transform-origin:0 0"></div>
 <div class="abs" style="left:330px;top:218px;width:163px;height:3px;background:#e6e6e6;transform:rotate(-.7deg);transform-origin:100% 0"></div>
 <div class="abs" style="left:43px;top:208px;width:2px;height:2px;background:#444"></div><div class="abs" style="left:48px;top:209px;width:1px;height:2px;background:#444"></div><div class="abs" style="left:123px;top:209px;width:3px;height:1px;background:#444"></div><div class="abs" style="left:187px;top:209px;width:2px;height:2px;background:#444"></div><div class="abs" style="left:197px;top:209px;width:2px;height:2px;background:#444"></div><div class="abs" style="left:335px;top:208px;width:2px;height:2px;background:#444"></div><div class="abs" style="left:340px;top:208px;width:1px;height:2px;background:#444"></div><div class="abs" style="left:20px;top:218px;width:3px;height:1px;background:#444"></div><div class="abs" style="left:67px;top:218px;width:4px;height:1px;background:#444"></div><div class="abs" style="left:402px;top:217px;width:2px;height:2px;background:#444"></div><div class="abs" style="left:425px;top:216px;width:3px;height:1px;background:#444"></div><div class="abs" style="left:448px;top:216px;width:2px;height:1px;background:#444"></div><div class="abs" style="left:477px;top:217px;width:2px;height:1px;background:#444"></div><div class="abs" style="left:487px;top:217px;width:1px;height:1px;background:#444"></div><div class="abs" style="left:491px;top:217px;width:1px;height:1px;background:#444"></div>
 <div class="abs sunken" style="left:890px;top:50px;width:14px;height:653px;background:#e3e3e3"></div>
 <svg class="abs" style="left:891px;top:52px" width="12" height="11"><path d="M6 .8L11.2 10.2L.8 10.2Z" fill="#e8e8e8" stroke="#b4b4b4" stroke-width=".8"/></svg>
 <div class="abs sunken" style="left:4px;top:707px;width:883px;height:13px;background:#e3e3e3"></div>
 <svg class="abs" style="left:6px;top:708px" width="11" height="11"><path d="M10 .8L.8 5.5L10 10.2Z" fill="#e8e8e8" stroke="#b4b4b4" stroke-width=".8"/></svg>
</div>
<div class="win" id="icfb" style="left:532px;top:757px;width:733px;height:187px;border-color:#0c1020;border-radius:6px 6px 5px 5px">
 <div class="atb"><div class="awb" style="left:3px"><svg width="15" height="13" viewBox="0 0 15 13"><path d="M4 4.5L7.5 8L11 4.5" stroke="#3c4a7c" stroke-width="2" fill="none"/></svg></div><div class="bar"></div><div class="ttl" style="left:243px">icfb - Log: /home/weichen/CDS.log</div><div class="awb" style="left:672px"><svg width="15" height="13" viewBox="0 0 15 13"><rect x="4" y="7.5" width="7" height="2.6" fill="#3c4a7c"/></svg></div><div class="awb" style="left:692px"><svg width="15" height="13" viewBox="0 0 15 13"><rect x="4" y="3" width="7" height="6.5" fill="none" stroke="#3c4a7c" stroke-width="1.2"/><rect x="4" y="2.5" width="7" height="2.2" fill="#3c4a7c"/></svg></div><div class="awb" style="left:712px"><svg width="15" height="13" viewBox="0 0 15 13"><path d="M4.5 3.5L10.5 9.5M10.5 3.5L4.5 9.5" stroke="#3c4a7c" stroke-width="2"/></svg></div></div>
 <div class="abs raised" style="left:3px;top:22px;width:691px;height:27px"></div>
 <div class="menu" style="left:11px;top:28px">File</div><div class="menu" style="left:41px;top:28px">Tools</div><div class="menu" style="left:84px;top:28px">Options</div><div class="menu" style="left:139px;top:28px">PSC</div>
 <div class="menu" style="left:659px;top:28px">Help</div><div class="menu" style="left:706px;top:29px">1</div>
 <div class="abs sunken" style="left:3px;top:49px;width:709px;height:52px"></div>
 <div class="mono abs" style="left:4.5px;top:50px;line-height:13px">1 1 ((L "avD661_1" "res") ()(S "R22" "res") () "Sch: (devType \"PP\" ms 1 m 1 l 3e-05 w 4e-06 r 1684)

SYNTAX ERROR found at line 1 column 208 of file *string*</div>
 <div class="abs" style="left:5px;top:90px;width:395px;height:5px;border-radius:3px;background:#f00808"></div>
 <div class="abs sunken" style="left:715px;top:50px;width:14px;height:51px;background:#e3e3e3"></div>
 <svg class="abs" style="left:716px;top:51px" width="12" height="11"><path d="M6 .8L11.2 10.2L.8 10.2Z" fill="#e8e8e8" stroke="#b4b4b4" stroke-width=".8"/></svg>
 <svg class="abs" style="left:716px;top:89px" width="12" height="11"><path d="M6 10.2L11.2 .8L.8 .8Z" fill="#e8e8e8" stroke="#b4b4b4" stroke-width=".8"/></svg>
 <div class="abs raised" style="left:716px;top:62px;width:12px;height:20px;background:#e6e6e6"></div>
 <div class="abs sunken" style="left:3px;top:104px;width:709px;height:13px;background:#e3e3e3"></div>
 <svg class="abs" style="left:4px;top:105px" width="11" height="11"><path d="M10 .8L.8 5.5L10 10.2Z" fill="#e8e8e8" stroke="#b4b4b4" stroke-width=".8"/></svg>
 <div class="abs raised" style="left:16px;top:105px;width:16px;height:11px;background:#e6e6e6"></div>
 <svg class="abs" style="left:700px;top:105px" width="11" height="11"><path d="M1 .8L10.2 5.5L1 10.2Z" fill="#e8e8e8" stroke="#b4b4b4" stroke-width=".8"/></svg>
 <div class="abs" style="left:3px;top:118px;width:726px;height:27px;border:1.5px solid #000"></div>
 <svg class="abs" style="left:7px;top:123px" width="8" height="16" viewBox="0 0 8 16"><path d="M1 1.5H7M1 14.5H7M4 1.5V14.5" stroke="#111" stroke-width="1.2"/></svg>
 <div class="mono abs" style="left:5px;top:146px;line-height:14px">mouse L: mouseSingleSelectPt          M: leHiMousePopUp()             R: vuiLVSRun()</div>
 <div class="abs" style="left:3px;top:162px;width:726px;height:2px;border-top:1px solid #a0a0a0;border-bottom:1px solid #fbfbfb"></div>
 <div class="mono abs b" style="left:5px;top:166px;line-height:14px">&gt;</div>
 <div class="abs" style="left:3px;top:181px;width:726px;height:2px;border-top:1px solid #a0a0a0;border-bottom:1px solid #fbfbfb"></div>
 <div class="abs" style="left:728px;top:146px;width:1px;height:36px;background:#a0a0a0"></div>
</div>
<!-- BOTTOM PANEL -->
<div id="bot" class="abs">
 <svg class="abs" style="left:3px;top:2px" width="24" height="20" viewBox="0 0 24 20">
  <path d="M2 12L12 6L22 10L12 17Z" fill="#d8c070" stroke="#6a5a20" stroke-width=".8"/><path d="M4 9L12 4L20 7L12 12Z" fill="#4a90c8" stroke="#234" stroke-width=".7"/><path d="M6 7L13 3L18 5L11 9Z" fill="#58a858" stroke="#243" stroke-width=".6"/><path d="M14 12L20 16" stroke="#444" stroke-width="1.6"/>
 </svg>
 <div class="abs" style="left:30px;top:0;width:1px;height:24px;background:#b0b0b0"></div>
 <div class="abs" style="left:33px;top:3px;width:7px;height:18px;background:repeating-linear-gradient(135deg,#a8a8a8 0 1px,transparent 1px 3px)"></div>
 <div class="task" style="left:42px;width:229px"><svg class="abs" style="left:4px;top:4px" width="16" height="15" viewBox="0 0 16 15"><rect x=".5" y=".5" width="15" height="12" rx="1" fill="#c8c8c8" stroke="#333"/><rect x="2.5" y="2.5" width="11" height="8" fill="#2a2a2a"/><rect x="3" y="13" width="10" height="1.5" fill="#555"/><path d="M4 5H8" stroke="#ddd" stroke-width=".8"/></svg><span style="left:23px">weichen@localhost:~/testFc</span></div>
 <div class="task act" style="left:272px;width:230px"><svg class="abs" style="left:5px;top:4px" width="14" height="16" viewBox="0 0 14 16"><path d="M1.5 1.5H9L12.5 5V14.5H1.5Z" fill="#fafafa" stroke="#3a3a3a" stroke-width="1"/><path d="M9 1.5V5H12.5" fill="#d8d8d8" stroke="#3a3a3a" stroke-width=".8"/></svg><span style="left:23px">icfb - Log: /home/weichen/CDS.log</span></div>
 <div class="task" style="left:503px;width:230px"><svg class="abs" style="left:5px;top:4px" width="14" height="16" viewBox="0 0 14 16"><path d="M1.5 1.5H9L12.5 5V14.5H1.5Z" fill="#fafafa" stroke="#3a3a3a" stroke-width="1"/><path d="M9 1.5V5H12.5" fill="#d8d8d8" stroke="#3a3a3a" stroke-width=".8"/></svg><span style="left:23px">LSW</span></div>
 <div class="task" style="left:734px;width:230px"><svg class="abs" style="left:3px;top:4px" width="16" height="16" viewBox="0 0 16 16"><rect x=".5" y=".5" width="15" height="15" fill="#9c9c9c" stroke="#6a6a6a"/><path d="M2 2L14 14M14 2L2 14" stroke="#c8c8c8" stroke-width="1.5"/><rect x="5" y="5" width="6" height="6" fill="#b8b8b8"/></svg><span style="left:23px">Library Manager: WorkArea: /home/weichen</span></div>
 <div class="task" style="left:965px;width:231px"><svg class="abs" style="left:5px;top:4px" width="14" height="16" viewBox="0 0 14 16"><path d="M1.5 1.5H9L12.5 5V14.5H1.5Z" fill="#fafafa" stroke="#3a3a3a" stroke-width="1"/><path d="M9 1.5V5H12.5" fill="#d8d8d8" stroke="#3a3a3a" stroke-width=".8"/></svg><span style="left:23px">Virtuoso® Layout Editing: D0B5_C8801</span></div>
 <div class="task" style="left:1197px;width:230px"><svg class="abs" style="left:5px;top:4px" width="14" height="16" viewBox="0 0 14 16"><path d="M1.5 1.5H9L12.5 5V14.5H1.5Z" fill="#fafafa" stroke="#3a3a3a" stroke-width="1"/><path d="M9 1.5V5H12.5" fill="#d8d8d8" stroke="#3a3a3a" stroke-width=".8"/></svg><span style="left:22px">/home/weichen/testFc/assuraRUN/LVS</span></div>
 <div class="abs" style="left:1775px;top:1px;width:145px;height:23px;background:#b2b2b2;border-left:1px solid #666"></div>
 <div class="abs" style="left:1776px;top:1px;width:36px;height:23px;background:#e4e4e4"></div>
 <div class="abs" style="left:1847px;top:1px;width:1px;height:23px;background:#8a8a8a"></div>
 <div class="abs" style="left:1812px;top:1px;width:1px;height:23px;background:#8a8a8a"></div>
 <div class="abs" style="left:1884px;top:1px;width:36px;height:23px;background:#1c2a56"></div>
 <svg class="abs" style="left:1776px;top:1px" width="36" height="23" viewBox="0 0 36 23"><rect x="1" y="2" width="4" height="8" fill="#fff" stroke="#333"/><rect x="6.5" y="3.5" width="17" height="12" fill="#f4f4f4" stroke="#333"/><rect x="12.500" y="6.500" width="17" height="12" fill="#f4f4f4" stroke="#333"/><rect x="11" y="19" width="12" height="2" fill="#555"/></svg>
 <svg class="abs" style="left:1884px;top:1px" width="36" height="23" viewBox="0 0 36 23"><rect x="3.5" y="3.500" width="17" height="13" fill="#fff" stroke="#0a1230"/><rect x="14.500" y="2.500" width="19" height="13" fill="#fff" stroke="#0a1230"/><rect x="8" y="17" width="14" height="2.500" fill="#dde"/><rect x="15" y="3" width="18" height="2" fill="#8a9ac8"/></svg>
</div>
<svg class="abs" style="left:1104px;top:746px" width="14.5" height="21.7" viewBox="0 0 16 24"><path d="M1.500 1.500L1.500 18.500L5.500 14.800L8.600 21.800L11.400 20.500L8.300 13.700L13.600 13.700Z" fill="#000" stroke="#fff" stroke-width="1.200" stroke-linejoin="round"/></svg>
</body></html>
